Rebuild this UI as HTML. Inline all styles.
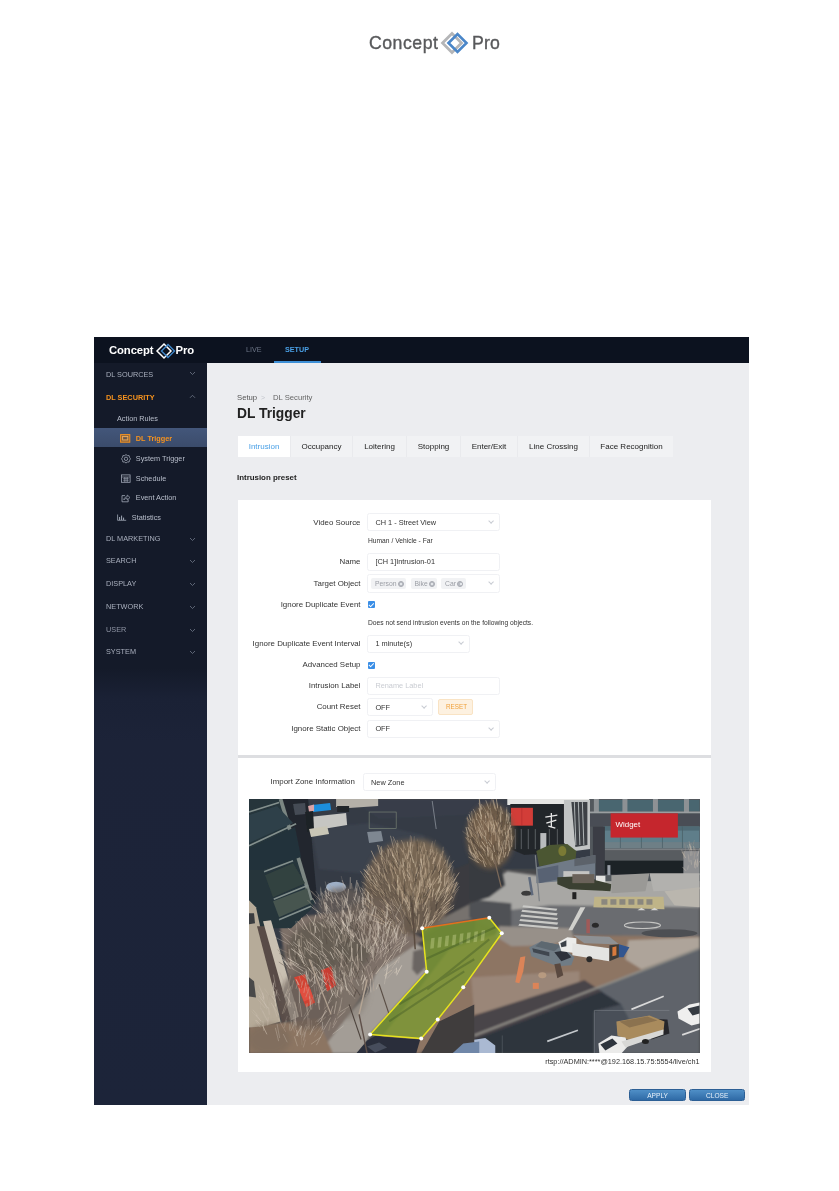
<!DOCTYPE html>
<html>
<head>
<meta charset="utf-8">
<style>
*{margin:0;padding:0;box-sizing:border-box;}
html,body{width:839px;height:1191px;background:#fff;overflow:hidden;}
body{font-family:"Liberation Sans",sans-serif;position:relative;}
.abs{position:absolute;}
.t{position:absolute;white-space:nowrap;line-height:1;}
#plogo1,#plogo2{will-change:transform;}
#app{will-change:transform;position:absolute;left:94px;top:337px;width:655px;height:768px;background:#ecedf0;overflow:hidden;}
#topbar{position:absolute;left:0;top:0;width:655px;height:25.6px;background:#0c121f;}
#side{position:absolute;left:0;top:25.6px;width:113px;height:742.4px;background:linear-gradient(#141a29 0,#141a29 305px,#1a2135 335px,#1c2338 380px,#1c2439 742px);}
.nav{position:absolute;left:12px;font-size:7.3px;color:#a9afbd;white-space:nowrap;line-height:1;}
.sub{position:absolute;font-size:7.3px;color:#b9bfcc;white-space:nowrap;line-height:1;}
.chev{position:absolute;left:95px;width:7px;height:5px;}
.card{position:absolute;background:#fff;}
.lbl{position:absolute;font-size:7.9px;color:#333;white-space:nowrap;line-height:1;text-align:right;width:160px;}
.inp{position:absolute;background:#fff;border:1px solid #f0f1f4;border-radius:2.5px;height:16px;}
.inp span{position:absolute;left:7px;top:4.6px;font-size:7.35px;color:#333;line-height:1;white-space:nowrap;}
.tab{position:absolute;top:99px;height:21.4px;background:#f1f2f4;font-size:8px;color:#222;line-height:21px;text-align:center;white-space:nowrap;}

.dd{position:absolute;right:6px;top:50%;margin-top:-3.2px;width:4.2px;height:4.2px;border-right:0.8px solid #c8ccd3;border-bottom:0.8px solid #c8ccd3;transform:rotate(45deg);}
.tag{position:absolute;top:3px;height:10.5px;background:#f1f2f4;border-radius:2px;font-weight:normal;font-size:6.8px;color:#9a9da4;line-height:11.6px;padding-left:3.6px;white-space:nowrap;}
.tag u{position:absolute;right:2.6px;top:2.3px;width:6px;height:6px;border-radius:50%;background:#b9bcc3;border:0.5px solid #a9acb3;}
.tag u:after{content:"";position:absolute;left:1.7px;top:1.7px;width:1.6px;height:1.6px;background:#eceef1;border-radius:50%;}
.cb{position:absolute;width:7.2px;height:7.2px;background:#3a8ee6;border-radius:1px;}
.cb:after{content:"";position:absolute;left:2.4px;top:0.9px;width:1.8px;height:3.6px;border-right:0.9px solid #fff;border-bottom:0.9px solid #fff;transform:rotate(45deg);}
.btn{position:absolute;top:752.2px;height:12px;border-radius:2.5px;background:linear-gradient(#4f8fc7,#2f6aa6);border:0.5px solid #2c5f95;color:#e8f2fb;font-size:6.6px;text-align:center;line-height:11.5px;}
</style>
</head>
<body>
<!-- page logo -->
<div class="t" id="plogo1" style="left:369.3px;top:35px;font-size:17.7px;color:#58595b;letter-spacing:0.5px;-webkit-text-stroke:0.35px #58595b;">Concept</div>
<div class="t" id="plogo2" style="left:471.5px;top:35px;font-size:17.7px;color:#58595b;letter-spacing:0.1px;-webkit-text-stroke:0.35px #58595b;">Pro</div>
<svg class="abs" style="left:440px;top:30px;" width="30" height="26" viewBox="0 0 30 26">
  <path d="M2.5 13 L12 3.5 L21.5 13 L12 22.5 Z" fill="none" stroke="#b4b5b7" stroke-width="2.7"/>
  <path d="M8.5 13 L17.5 4 L26.5 13 L17.5 22 Z" fill="none" stroke="#4a86c8" stroke-width="2.6"/>
</svg>

<div id="app">

  <div id="topbar">
    <div class="t" style="left:152px;top:8.6px;font-size:7.2px;color:#6d7687;">LIVE</div>
    <div class="t" style="left:191px;top:8.6px;font-size:7.2px;color:#4aa0e6;font-weight:bold;">SETUP</div>
    <div class="abs" style="left:180px;top:24px;width:47px;height:1.6px;background:#3d8fd6;"></div>
  </div>
  <div id="side">
    <div class="abs" style="left:0;top:65.4px;width:113px;height:19.4px;background:linear-gradient(#43567a,#3b4c6b);"></div>
  </div>
  <!-- app logo -->
  <div class="t" style="left:15px;top:8px;font-size:11.3px;color:#fff;font-weight:bold;letter-spacing:-0.1px;">Concept</div>
  <div class="t" style="left:81.5px;top:8px;font-size:11.3px;color:#fff;font-weight:bold;letter-spacing:-0.1px;">Pro</div>
  <svg class="abs" style="left:61px;top:4px;" width="22" height="20" viewBox="0 0 22 20">
    <path d="M2 10 L9 3 L16 10 L9 17 Z" fill="none" stroke="#fff" stroke-width="1.5"/>
    <path d="M6.5 10 L13 3.5 L19.5 10 L13 16.5 Z" fill="none" stroke="#3f86c9" stroke-width="1.4"/>
  </svg>

  <!-- nav -->
  <div class="nav" style="top:34px;">DL SOURCES</div>
  <div class="nav" style="top:57px;color:#f7931e;font-weight:bold;">DL SECURITY</div>
  <div class="sub" style="left:23px;top:77.5px;">Action Rules</div>
  <div class="sub" style="left:41.8px;top:97.5px;color:#f7931e;font-weight:bold;">DL Trigger</div>
  <div class="sub" style="left:41.8px;top:117.5px;">System Trigger</div>
  <div class="sub" style="left:41.8px;top:137.5px;">Schedule</div>
  <div class="sub" style="left:41.8px;top:157px;">Event Action</div>
  <div class="sub" style="left:37.8px;top:177px;">Statistics</div>
  <div class="nav" style="top:198px;">DL MARKETING</div>
  <div class="nav" style="top:220.2px;">SEARCH</div>
  <div class="nav" style="top:243.1px;">DISPLAY</div>
  <div class="nav" style="top:265.6px;">NETWORK</div>
  <div class="nav" style="top:288.6px;color:#8f95a4;">USER</div>
  <div class="nav" style="top:310.8px;">SYSTEM</div>


  <!-- sidebar icons -->
  <svg class="abs" style="left:26px;top:97px;" width="11" height="9" viewBox="0 0 11 9"><rect x="0.6" y="0.6" width="9.2" height="7.6" fill="#c9771a" fill-opacity="0.55" stroke="#f7931e" stroke-width="1"/><rect x="2.6" y="2.4" width="5.2" height="3.6" fill="none" stroke="#f9b45c" stroke-width="0.8"/><path d="M3.8 4.2 L6.6 4.2" stroke="#3c4b68" stroke-width="0.8"/></svg>
  <svg class="abs" style="left:27px;top:116.5px;" width="10" height="10" viewBox="0 0 10 10"><path d="M5 0.6 L6.4 1.6 L8.1 1.6 L8.5 3.3 L9.5 4.8 L8.5 6.3 L8.1 8 L6.4 8 L5 9 L3.6 8 L1.9 8 L1.5 6.3 L0.5 4.8 L1.5 3.3 L1.9 1.6 L3.6 1.6 Z" fill="none" stroke="#a2a9b8" stroke-width="0.8"/><circle cx="5" cy="4.8" r="1.7" fill="none" stroke="#a2a9b8" stroke-width="0.8"/></svg>
  <svg class="abs" style="left:27px;top:136.5px;" width="10" height="9" viewBox="0 0 10 9"><rect x="0.5" y="0.9" width="8.6" height="7.4" fill="none" stroke="#a2a9b8" stroke-width="0.8"/><path d="M0.5 3 H9.1 M2.2 4.6 H7.6 M2.2 6.3 H7.6 M3.4 3 V8 M5 3 V8 M6.6 3 V8" stroke="#9aa1af" stroke-width="0.6"/></svg>
  <svg class="abs" style="left:26.5px;top:156.5px;" width="10" height="9" viewBox="0 0 10 9"><path d="M4 1.6 H1 V7.8 H7.2 V5.6" fill="none" stroke="#a2a9b8" stroke-width="0.8"/><path d="M2.8 6 C3 3.8 4.4 2.8 6.2 2.8 V1 L9 3.5 L6.2 6 V4.3 C4.8 4.3 3.6 4.8 2.8 6 Z" fill="none" stroke="#a2a9b8" stroke-width="0.7"/></svg>
  <svg class="abs" style="left:22.5px;top:177px;" width="10" height="7" viewBox="0 0 10 7"><path d="M0.6 0.5 V6.3 H9.2" fill="none" stroke="#a2a9b8" stroke-width="0.8"/><path d="M2.6 6 V3 M4.6 6 V1.6 M6.6 6 V3.6" stroke="#a2a9b8" stroke-width="1"/></svg>
  <!-- chevrons -->
  <svg class="chev" style="top:34.3px;" viewBox="0 0 7 5"><path d="M1 1 L3.5 3.5 L6 1" fill="none" stroke="#707889" stroke-width="0.8"/></svg>
  <svg class="chev" style="top:57.4px;" viewBox="0 0 7 5"><path d="M1 3.8 L3.5 1.3 L6 3.8" fill="none" stroke="#707889" stroke-width="0.8"/></svg>
  <svg class="chev" style="top:199.5px;" viewBox="0 0 7 5"><path d="M1 1 L3.5 3.5 L6 1" fill="none" stroke="#707889" stroke-width="0.8"/></svg>
  <svg class="chev" style="top:222px;" viewBox="0 0 7 5"><path d="M1 1 L3.5 3.5 L6 1" fill="none" stroke="#707889" stroke-width="0.8"/></svg>
  <svg class="chev" style="top:245px;" viewBox="0 0 7 5"><path d="M1 1 L3.5 3.5 L6 1" fill="none" stroke="#707889" stroke-width="0.8"/></svg>
  <svg class="chev" style="top:267.5px;" viewBox="0 0 7 5"><path d="M1 1 L3.5 3.5 L6 1" fill="none" stroke="#707889" stroke-width="0.8"/></svg>
  <svg class="chev" style="top:290.5px;" viewBox="0 0 7 5"><path d="M1 1 L3.5 3.5 L6 1" fill="none" stroke="#707889" stroke-width="0.8"/></svg>
  <svg class="chev" style="top:313px;" viewBox="0 0 7 5"><path d="M1 1 L3.5 3.5 L6 1" fill="none" stroke="#707889" stroke-width="0.8"/></svg>
  <!-- breadcrumb + title -->
  <div class="t" style="left:143px;top:56.5px;font-size:7.7px;color:#555;">Setup</div>
  <div class="t" style="left:167px;top:56.8px;font-size:7px;color:#c3c6cc;">&gt;</div>
  <div class="t" style="left:179px;top:56.5px;font-size:7.7px;color:#666;">DL Security</div>
  <div class="t" style="left:143px;top:70.2px;font-size:13.8px;color:#222;font-weight:bold;">DL Trigger</div>

  <!-- tabs -->
  <div class="abs" style="left:144px;top:99px;width:435px;height:21.4px;background:#e9eaed;"></div>
  <div class="tab" style="left:144px;width:52px;background:#fff;color:#4aa0e6;">Intrusion</div>
  <div class="tab" style="left:197px;width:61px;">Occupancy</div>
  <div class="tab" style="left:259px;width:53px;">Loitering</div>
  <div class="tab" style="left:313px;width:53px;">Stopping</div>
  <div class="tab" style="left:367px;width:56px;">Enter/Exit</div>
  <div class="tab" style="left:424px;width:71px;">Line Crossing</div>
  <div class="tab" style="left:496px;width:83px;">Face Recognition</div>

  <div class="t" style="left:143px;top:136.5px;font-size:7.9px;color:#222;font-weight:bold;">Intrusion preset</div>

  <!-- card 1 -->
  <div class="abs" style="left:144px;top:416px;width:473px;height:6px;background:#dddee1;"></div>
  <div class="card" style="left:144px;top:162.5px;width:473px;height:255.3px;"></div>
  <div class="card" style="left:144px;top:420.6px;width:473px;height:314.4px;"></div>

  <!-- form rows -->
  <div class="lbl" style="left:106.5px;top:181.5px;">Video Source</div>
  <div class="inp" style="left:273.4px;top:176.2px;width:132.6px;height:18.3px;"><span>CH 1 - Street View</span><i class="dd"></i></div>
  <div class="t" style="left:274px;top:201px;font-size:6.7px;color:#333;">Human / Vehicle - Far</div>
  <div class="lbl" style="left:106.5px;top:221.4px;">Name</div>
  <div class="inp" style="left:273.4px;top:215.5px;width:132.6px;height:18.3px;"><span>[CH 1]Intrusion-01</span></div>
  <div class="lbl" style="left:106.5px;top:242.8px;">Target Object</div>
  <div class="inp" style="left:273.4px;top:237.3px;width:132.6px;height:18.3px;">
    <b class="tag" style="left:3px;width:35px;">Person<u></u></b>
    <b class="tag" style="left:42.5px;width:26.5px;">Bike<u></u></b>
    <b class="tag" style="left:73px;width:24.5px;">Car<u></u></b>
    <i class="dd"></i></div>
  <div class="lbl" style="left:106.5px;top:263.9px;">Ignore Duplicate Event</div>
  <div class="cb" style="left:274px;top:263.8px;"></div>
  <div class="t" style="left:274px;top:282.8px;font-size:6.7px;color:#333;">Does not send intrusion events on the following objects.</div>
  <div class="lbl" style="left:106.5px;top:302.7px;">Ignore Duplicate Event Interval</div>
  <div class="inp" style="left:273.4px;top:297.5px;width:103px;height:18.3px;"><span>1 minute(s)</span><i class="dd"></i></div>
  <div class="lbl" style="left:106.5px;top:324.4px;">Advanced Setup</div>
  <div class="cb" style="left:274px;top:324.6px;"></div>
  <div class="lbl" style="left:106.5px;top:345px;">Intrusion Label</div>
  <div class="inp" style="left:273.4px;top:339.8px;width:132.6px;height:18px;"><span style="color:#c9ccd2;">Rename Label</span></div>
  <div class="lbl" style="left:106.5px;top:366.3px;">Count Reset</div>
  <div class="inp" style="left:273.4px;top:361.2px;width:65.6px;height:17.6px;"><span>OFF</span><i class="dd"></i></div>
  <div class="abs" style="left:343.5px;top:362.3px;width:35.5px;height:15.7px;background:#fdf1e0;border:1px solid #f9e3c4;border-radius:2px;"><div class="t" style="left:7.5px;top:4px;font-size:6.3px;color:#f0a23c;">RESET</div></div>
  <div class="lbl" style="left:106.5px;top:387.8px;">Ignore Static Object</div>
  <div class="inp" style="left:273.4px;top:382.8px;width:132.6px;height:18px;"><span>OFF</span><i class="dd"></i></div>

  <!-- card 2 content -->
  <div class="lbl" style="left:100.8px;top:440.5px;">Import Zone Information</div>
  <div class="inp" style="left:268.5px;top:436px;width:133.7px;height:17.5px;"><span style="left:7.5px;">New Zone</span><i class="dd"></i></div>
<!--PHOTO-START-->
  <div class="abs" style="left:155px;top:461.6px;width:450.5px;height:254.5px;overflow:hidden;background:#4a4a4c;"><svg id="photo" style="position:absolute;left:-2px;top:-2px;filter:blur(0.45px);" width="454.5" height="258.5" viewBox="-2 -2 454 258" preserveAspectRatio="none">
    <defs>
      <filter id="b1" x="-5%" y="-5%" width="110%" height="110%"><feGaussianBlur stdDeviation="1"/></filter>
      <filter id="b2" x="-10%" y="-10%" width="120%" height="120%"><feGaussianBlur stdDeviation="2.5"/></filter>
      <filter id="b05" x="-5%" y="-5%" width="110%" height="110%"><feGaussianBlur stdDeviation="0.6"/></filter>
      <filter id="b4" x="-20%" y="-20%" width="140%" height="140%"><feGaussianBlur stdDeviation="4"/></filter>
      <clipPath id="pc"><rect x="-2" y="-2" width="454" height="258"/></clipPath>
    </defs>
    <g clip-path="url(#pc)">
    <rect x="-2" y="-2" width="454" height="258" fill="#4a4a4c"/>
<g filter="url(#b1)">
<polygon points="0,0 450,0 450,70 230,70 225,140 0,150" fill="#343b45" />
<polygon points="62,30 120,24 175,36 178,60 120,75 70,70" fill="#3b424d" />
<polygon points="100,0 260,0 260,14 130,20" fill="#373e48" />
<polygon points="170,130 240,117 262,100 252,84 215,98 183,116" fill="#77726e" />
<polygon points="232,100 262,84 266,100 248,112" fill="#9a9896" />
<polygon points="205,70 230,60 230,100 195,118" fill="#3a3b3f" />
<polygon points="225,95 258,72 300,78 362,76 450,74 450,110 300,108 240,114 225,116" fill="#a8a7a4" />
<polygon points="220,116 300,106 450,108 450,138 330,136 253,131 238,118" fill="#6a6c6f" />
<polygon points="220,100 262,104 262,130 250,134 220,118" fill="#505154" />
<polygon points="220,55 250,56 256,86 240,98 220,104" fill="#393b3f" />
<polygon points="200,150 255,132 330,136 450,137 450,149 225,236 225,254 120,254" fill="#8d7463" />
<polygon points="250,127 322,129 324,139 300,146 262,147 246,137" fill="#979089" />
<polygon points="379,141 450,138 450,149 392,170 376,160" fill="#aea49a" />
<polygon points="222,178 330,172 330,192 225,215" fill="#9a8678" />
<polygon points="450,149 225,236 225,254 450,254" fill="#5f646b" />
<polygon points="225,225 335,181 372,205 345,212 345,254 225,254" fill="#2d343e" />
<polygon points="345,212 372,205 385,230 372,254 345,254" fill="#4a5058" />
<polygon points="170,254 225,216 335,181 352,192 225,240 205,254" fill="#4a4448" />
<path d="M225,236 L450,149" stroke="#8f8c86" stroke-width="2.2" fill="none" />
<polygon points="66,254 120,192 134,152 165,143 176,150 177.5,172.5 121,235 112,254" fill="#a39d96" />
<polygon points="164,152 175,149 176.5,168 168,176 163,170" fill="#6a6562" />
<polygon points="30,120 120,110 175,140 130,170 100,215 70,254 40,254 45,215" fill="#7d7068" />
<polygon points="0,227 16,225 68,219 84,254 0,254" fill="#8c7562" />
</g>
<g filter="url(#b05)">
<polygon points="0,0 59,0 67,100 62,110 42,129 12,129 0,101" fill="#25343b" />
<polygon points="33,0 59,0 68,100 62,101" fill="#23282f" />
<polygon points="44,5 56,4 57,15 46,16" fill="#454b54" />
<path d="M31.5,0 L62,101" stroke="#7b8682" stroke-width="3.8" fill="none" />
<path d="M0,13 L30,3.5" stroke="#84908d" stroke-width="1.7" fill="none" />
<path d="M0,46.6 L47,24.7" stroke="#84908d" stroke-width="1.7" fill="none" />
<path d="M15,72.6 L44,61.7" stroke="#84908d" stroke-width="1.7" fill="none" />
<path d="M24.7,100 L59,86" stroke="#84908d" stroke-width="1.7" fill="none" />
<path d="M30,120.6 L62,107" stroke="#84908d" stroke-width="1.7" fill="none" />
<polygon points="0,16 28,7 44,24 0,44" fill="#2e4048" />
<polygon points="0,50 46,28 52,58 14,70 0,70" fill="#22313a" />
<polygon points="24,102 58,89 62,104 30,118" fill="#46544f" />
<polygon points="16,76 44,64 56,84 24,98" fill="#33423f" />
<polygon points="87,0 129,0 129,7 100,9 87,8" fill="#b4b0a8" />
<polygon points="88,7 100,7 100,13 88,13" fill="#23262a" />
<polygon points="60,18 97,14 98,26 62,32" fill="#c6c6c2" />
<polygon points="63,6 81,4 82,11 64,13" fill="#1e8fdc" />
<polygon points="59,7 65,5.5 65,12 60,13" fill="#d9a4a6" />
<polygon points="56,13 64,12 65,32 58,33" fill="#1f2226" />
<polygon points="60,30 78,27 80,35 62,38" fill="#c9c6b6" />
<ellipse cx="87" cy="88" rx="10" ry="5.5" fill="#9fb1c8" />
<polygon points="118,33 132,32 134,42 120,44" fill="#7e8791" />
<polygon points="0,101 7,108 31.5,222 13.7,227 0,228" fill="#b6ab99" />
<polygon points="0,114 5,114 6,124 0,125" fill="#3a3d40" />
<polygon points="0,178 5,182 7,198 0,197" fill="#4a4a48" />
<polygon points="8,127 19,127 45,219 33,223" fill="#584c46" />
<polygon points="14,122 22,121 50,217 42,221" fill="#c9c0b2" />
</g>
<g filter="url(#b05)">
<polygon points="258,0 340,0 340,6 258,6" fill="#e6e6e4" />
<polygon points="261,5 315,5 315,53 275,56 261,50" fill="#24272b" />
<rect x="261.7" y="8.8" width="21.9" height="17.8" fill="#d23d38" />
<path d="M272.5,8.8 L272.5,26.6" stroke="#b02a28" stroke-width="0.6" fill="none" />
<path d="M296,18 L308,16 M302,14 L302,28 M297,24 L307,21 M299,27 L306,29" stroke="#e8e8e8" stroke-width="1.3" fill="none"/>
<path d="M266,30 L266,50" stroke="#6f7478" stroke-width="0.7" fill="none" />
<path d="M272,30 L272,50" stroke="#6f7478" stroke-width="0.7" fill="none" />
<path d="M279,30 L279,50" stroke="#6f7478" stroke-width="0.7" fill="none" />
<path d="M286,30 L286,50" stroke="#6f7478" stroke-width="0.7" fill="none" />
<path d="M300,30 L300,50" stroke="#6f7478" stroke-width="0.7" fill="none" />
<path d="M308,30 L308,50" stroke="#6f7478" stroke-width="0.7" fill="none" />
<rect x="291" y="34" width="6" height="18" fill="#b9bbbd" />
<polygon points="314.6,1 341,1 341,50 325,52 314.6,44" fill="#c2c4c4" />
<polygon points="322,3 338,3 338,46 326,48" fill="#3c4045" />
<path d="M325,3 L326.5,46" stroke="#aeb2b4" stroke-width="1" fill="none" />
<path d="M329,3 L330.5,46" stroke="#aeb2b4" stroke-width="1" fill="none" />
<path d="M333,3 L334.5,46" stroke="#aeb2b4" stroke-width="1" fill="none" />
<rect x="340.6" y="0" width="110" height="82" fill="#53585d" />
<rect x="347" y="1" width="103" height="11.5" fill="#4a6670" />
<rect x="344.5" y="0" width="5" height="13" fill="#8d9194" />
<rect x="373" y="0" width="5" height="13" fill="#8d9194" />
<rect x="403.5" y="0" width="5" height="13" fill="#8d9194" />
<rect x="434.5" y="0" width="5" height="13" fill="#8d9194" />
<rect x="340.6" y="12.5" width="110" height="2" fill="#9a9ea0" />
<rect x="340.6" y="14.5" width="110" height="13" fill="#494e54" />
<rect x="354" y="27.5" width="96" height="22" fill="#5e7e8a" />
<rect x="354" y="27.5" width="96" height="4" fill="#4f6a74" />
<rect x="354" y="43" width="96" height="6" fill="#6e7f86" />
<path d="M371,27.5 L371,49" stroke="#4c6169" stroke-width="0.8" fill="none" />
<path d="M392,27.5 L392,49" stroke="#4c6169" stroke-width="0.8" fill="none" />
<path d="M413,27.5 L413,49" stroke="#4c6169" stroke-width="0.8" fill="none" />
<path d="M433,27.5 L433,49" stroke="#4c6169" stroke-width="0.8" fill="none" />
<rect x="354" y="49.5" width="96" height="12.5" fill="#585c61" />
<rect x="354" y="49.5" width="96" height="1.5" fill="#7a7e82" />
<rect x="354" y="61.5" width="80" height="14" fill="#1f2328" />
<rect x="434" y="52" width="16" height="24" fill="#8f9092" />
<polygon points="343.5,27.5 355.5,27.5 355.5,83 343.5,83" fill="#3a3e44" />
<rect x="346.5" y="76.5" width="9.5" height="7" fill="#e2e2e0" />
<rect x="358" y="66" width="3" height="10" fill="#9aa0a8" />
<polygon points="287,52 300,46 318,45 327,52 326,62 290,67" fill="#4c5632" />
<ellipse cx="313" cy="52" rx="4" ry="5" fill="#7a7a34" />
<polygon points="287,68 325,60 346,56 346,80 310,82 287,84" fill="#707a86" />
<polygon points="325,60 346,56 346,64 325,67" fill="#5b626b" />
<rect x="314" y="72" width="26" height="6" fill="#c4c4c2" />
<polygon points="288,70 309,66 309,80 290,84" fill="#596273" />
<polygon points="308,78 330,77 362,85 361,92 320,90 308,85" fill="#3a4030" />
<rect x="323" y="75" width="22" height="9" fill="#6b625a" />
</g>
<g filter="url(#b05)">
<polygon points="362,76 400,74 396,92 362,94" fill="#9a9996" />
<polygon points="400,74 450,74 450,90 404,92" fill="#b2b1ae" />
<polygon points="415,92 450,88 450,108 425,106" fill="#bab6ae" />
<polygon points="345,97.5 414,97.5 415,110 344,108" fill="#bfb488" />
<rect x="352" y="100" width="6" height="5.5" fill="#8a877e" />
<rect x="361" y="100" width="6" height="5.5" fill="#8a877e" />
<rect x="370" y="100" width="6" height="5.5" fill="#8a877e" />
<rect x="379" y="100" width="6" height="5.5" fill="#8a877e" />
<rect x="388" y="100" width="6" height="5.5" fill="#8a877e" />
<rect x="397" y="100" width="6" height="5.5" fill="#8a877e" />
<polygon points="274,106 308,109.5 307,111.6 273,108" fill="#c9c9c6" />
<polygon points="273,110.6 308.3,114.1 307.3,116.2 272,112.6" fill="#c9c9c6" />
<polygon points="272,115.2 308.6,118.7 307.6,120.8 271,117.2" fill="#c9c9c6" />
<polygon points="271,119.8 308.9,123.3 307.9,125.4 270,121.8" fill="#c9c9c6" />
<polygon points="270,124.4 309.2,127.9 308.2,130 269,126.4" fill="#c9c9c6" />
<polygon points="331,108 336,108 323,131 319,131" fill="#d0d0cc" />
<ellipse cx="393" cy="126" rx="18" ry="3.3" fill="none" stroke="#c4c4c2" stroke-width="1.1"/>
<polygon points="388,111 392,108.5 396,111" fill="#d5d5d2" />
<polygon points="401,111 405,108.5 409,111" fill="#d5d5d2" />
<ellipse cx="420" cy="134" rx="28" ry="4" fill="#4e4f52" />
<rect x="337" y="120" width="3.5" height="14" fill="#a05a58" />
<ellipse cx="346" cy="126" rx="3.5" ry="2.5" fill="#2a2a2c" />
<rect x="323" y="93" width="4" height="7" fill="#222" />
<ellipse cx="277" cy="94" rx="5" ry="2.5" fill="#3a3a3a" />
<path d="M286,56 L290,102" stroke="#7a7f84" stroke-width="1.2" fill="none" />
<path d="M280,78 L283,96" stroke="#5e6a7c" stroke-width="2.5" fill="none" />
</g>
<g filter="url(#b05)">
<polygon points="280,148 292,142 312,146 325,158 322,166 308,167 282,157" fill="#707b85" />
<polygon points="305,153 316,151 322,158 312,162" fill="#2d333b" />
<polygon points="283,149 300,153 300,157 284,153" fill="#3f464f" />
<polygon points="292,142 312,146 305,152 286,147" fill="#5d6770" />
<polygon points="309,143 318,138 327,139 327,154 312,152" fill="#ececea" />
<polygon points="311,144 317,141 317,147 312,148" fill="#3a3f46" />
<polygon points="324,136 360,137.5 369.5,145 335,144" fill="#8e9194" />
<polygon points="323,144 360,149 360,162 323,156" fill="#e4e4e2" />
<polygon points="360,146 369.5,145 369.5,158 360,162" fill="#3c3a38" />
<polygon points="363,148 367,147 367,156 363,157" fill="#d87a3c" />
<polygon points="369.5,145 380,148 374,158 369.5,158" fill="#30558f" />
<ellipse cx="340" cy="160" rx="3" ry="3" fill="#2a2a2a" />
<polygon points="271,158 276,157 274,172 270,184 266,183" fill="#dc8458" />
<rect x="283.5" y="183.5" width="6" height="6" fill="#dc8458" />
<polygon points="305,165 311,164 314,176 308,179" fill="#5a4a40" />
<ellipse cx="293" cy="176" rx="4" ry="3" fill="#b79a80" />
<polygon points="394,219 418,220 420,234 402,240" fill="#26282c" />
<polygon points="367,222 400,216 415,222 414,232 383,242 368,236" fill="#a98b5d" />
<polygon points="370,222 398,217 408,221 380,228" fill="#8b7250" />
<polygon points="349,244 362,236 376,238 379,246 372,254 350,254" fill="#ebebea" />
<polygon points="351,245 363,239 368,244 356,251" fill="#2f353d" />
<polygon points="372,242 414,230 414,235 376,248" fill="#d8d8d6" />
<ellipse cx="396" cy="242" rx="3.5" ry="2.5" fill="#222" />
<polygon points="428,212 440,205 450,203 450,224 442,226 429,219" fill="#efefee" />
<polygon points="438,209 450,206 450,214 443,216" fill="#343a42" />
<polygon points="220,241 236,238.5 246,246 246,254 220,254" fill="#aab9d2" />
<polygon points="107,254 118,241 126,236.5 171,240 167,254" fill="#2a2f3a" />
<polygon points="118,247 130,243 138,248 126,253" fill="#474e5c" />
<polygon points="172,254 190,222 225,205 225,254" fill="#403c3d" />
<polygon points="203,254 214,244 230,242 230,254" fill="#6f87a8" />
<polygon points="381.7,209 414,196 414.5,197.6 382.3,210.8" fill="#d9d9d9" />
<polygon points="297.6,241 328.3,230 328.8,231.6 298.2,242.8" fill="#c4c8cc" />
<polygon points="432.4,234.5 450,228.5 450,230.3 433,236.3" fill="#d9d9d9" />
</g>
<g filter="url(#b2)">
<ellipse cx="160" cy="88" rx="45" ry="47" fill="#6c5d4e" fill-opacity="0.92"/>
<ellipse cx="170" cy="72" rx="30" ry="32" fill="#7b6a56" fill-opacity="0.8"/>
<ellipse cx="125" cy="122" rx="30" ry="22" fill="#6f6257" fill-opacity="0.8"/>
<ellipse cx="95" cy="108" rx="26" ry="20" fill="#6a5f58" fill-opacity="0.75"/>
<ellipse cx="241" cy="37" rx="24" ry="33" fill="#6e5b47" fill-opacity="0.9"/>
<ellipse cx="238" cy="30" rx="12" ry="18" fill="#806a52" fill-opacity="0.7"/>
<ellipse cx="80" cy="150" rx="42" ry="30" fill="#5e554e" fill-opacity="0.75"/>
<ellipse cx="60" cy="200" rx="30" ry="30" fill="#5f564f" fill-opacity="0.6"/>
<ellipse cx="100" cy="190" rx="20" ry="30" fill="#7a7066" fill-opacity="0.4"/>
<ellipse cx="20" cy="240" rx="22" ry="16" fill="#7c6a5a" fill-opacity="0.6"/>
</g>
<g filter="url(#b05)">
<polygon points="45,178 56,175 66,203 57,208" fill="#d24233" />
<polygon points="72,171 82,167 87,186 78,192" fill="#c93d30" />
<polygon points="50,190 60,187 64,198 55,202" fill="#e05040" />
</g>
<g filter="url(#b05)">
<path d="M152.2,105.6l-1.1,-5.5M126.7,86.1l-2.0,-5.5M160.2,113.7l0.3,-9.1M153.2,120.0l-2.8,-12.6M163.7,102.2l2.1,-8.0M152.3,80.3l-2.2,-11.3M135.2,97.6l-2.9,-7.9M194.1,110.2l1.6,-5.8M155.2,75.7l-4.0,-8.3M155.5,114.9l-0.4,-6.9M163.6,131.6l-1.7,-11.1M180.2,93.2l1.0,-12.2M158.0,111.2l-0.4,-12.5M169.8,50.0l-1.8,-10.4M163.3,97.6l-3.6,-8.8M196.5,88.4l2.4,-10.9M159.6,91.8l-2.3,-8.1M193.8,64.5l2.8,-8.3M180.5,128.5l4.3,-3.4M134.7,91.4l-1.2,-5.8M178.0,62.9l-0.3,-6.4M157.5,88.3l-1.1,-8.5M160.1,119.2l-0.8,-7.9M118.3,78.6l-3.4,-6.1M163.4,55.7l-0.4,-12.7M172.1,112.3l5.5,-10.2M185.6,70.3l-0.1,-6.6M158.7,98.1l-0.6,-11.9M184.9,75.0l5.3,-11.9M122.7,89.3l-3.7,-9.3M183.1,52.8l3.3,-12.2" stroke="#94826e" stroke-width="0.40" stroke-opacity="0.72" fill="none"/>
<path d="M152.8,98.1l-1.3,-5.1M147.5,63.3l-3.2,-9.1M149.6,101.9l-1.1,-12.9M175.8,77.4l0.8,-8.3M192.8,60.3l1.2,-12.6M163.7,129.0l-3.0,-9.8M147.5,56.8l-3.9,-8.0M150.2,48.4l-2.4,-7.6M167.4,71.2l-3.7,-11.4M159.5,69.4l-2.6,-10.7M195.6,113.4l5.7,-8.4M168.6,109.2l-0.1,-9.1M198.5,89.1l4.3,-5.0M168.3,90.1l-2.0,-9.7M138.3,118.7l-5.5,-10.1M136.4,117.4l-5.0,-6.7M199.7,83.8l5.4,-9.8M134.0,81.8l-1.2,-7.3M125.3,109.6l-5.0,-8.5M130.1,69.6l-7.6,-7.9M175.9,82.3l-0.6,-8.3M203.9,92.4l3.8,-10.1M168.8,92.7l2.4,-12.4" stroke="#a8947c" stroke-width="0.65" stroke-opacity="0.72" fill="none"/>
<path d="M172.3,95.8l0.7,-11.6M136.6,64.9l-5.8,-7.8M118.4,83.4l-3.2,-6.5M145.7,112.5l-5.4,-10.0M137.8,107.8l-7.7,-6.5M178.7,98.4l0.1,-7.7M177.5,90.0l-0.7,-7.9M148.6,89.1l0.7,-11.3M138.3,86.3l-4.0,-4.9M128.5,95.1l-6.5,-6.2M171.3,53.8l3.7,-9.4M161.0,88.4l1.1,-11.7M141.7,102.2l-4.8,-9.2M152.6,87.8l-2.8,-9.8M153.8,55.8l1.1,-12.5M127.0,93.8l-6.3,-5.6M183.2,53.7l-1.1,-7.3M180.1,67.5l0.0,-11.2M172.1,63.9l-0.2,-10.0M189.5,121.6l5.7,-9.1M160.6,47.4l0.6,-11.3M191.6,99.0l2.7,-6.4M180.3,74.1l-1.8,-11.5M182.3,119.5l7.0,-9.8M180.7,80.6l5.5,-9.3M138.4,74.8l-1.7,-4.9M174.6,68.2l3.5,-7.2M127.8,91.1l-4.9,-7.9M183.2,52.5l-0.3,-8.4M179.8,115.6l2.0,-4.8M148.4,123.0l-2.3,-8.7M157.9,99.1l0.9,-9.8M204.3,97.0l5.1,-7.2" stroke="#c4b097" stroke-width="0.40" stroke-opacity="0.72" fill="none"/>
<path d="M199.9,102.0l2.8,-5.5M177.3,88.3l3.4,-9.6M148.5,93.2l0.0,-12.2M167.0,79.7l2.2,-7.0M155.0,102.2l-1.8,-7.1M127.2,62.8l-5.1,-11.2M176.0,105.6l4.5,-11.3M133.3,120.2l-7.6,-6.9M184.1,85.7l6.6,-10.2M169.2,126.1l0.7,-11.1M197.5,76.5l3.2,-6.6M172.5,83.6l-0.6,-12.2M197.4,92.4l5.7,-10.2M183.1,64.8l3.4,-6.5M185.9,100.6l3.6,-10.3M139.3,107.2l-3.7,-6.9M119.3,75.9l-3.4,-4.7M150.7,90.8l0.2,-7.4M192.9,109.2l7.6,-5.8M203.6,82.9l6.4,-9.5M143.8,111.4l-5.9,-7.9M130.3,76.3l-1.7,-12.8" stroke="#c4b097" stroke-width="0.90" stroke-opacity="0.72" fill="none"/>
<path d="M145.4,127.9l-8.0,-5.4M180.1,116.4l0.6,-9.2M126.0,73.8l-3.8,-3.9M131.9,87.9l-5.6,-6.1M180.7,98.9l1.0,-9.2M132.0,67.5l-6.7,-8.3M117.6,86.6l-5.4,-4.2M169.0,91.6l1.9,-9.9M173.7,111.8l-0.2,-12.8M188.9,62.9l4.6,-10.9M153.7,90.7l0.4,-9.1M153.2,68.7l-3.7,-9.1M147.7,112.1l-5.4,-8.0M194.7,98.8l3.6,-5.3M177.0,127.8l2.5,-6.4M119.9,107.8l-6.2,-4.2M164.6,47.6l0.5,-10.5M153.0,68.7l0.6,-7.8M184.3,118.3l4.4,-7.7M185.3,118.1l3.9,-5.7M125.9,107.9l-4.0,-9.0M128.8,81.4l-4.8,-7.9M150.8,76.1l0.5,-9.2" stroke="#bfa98e" stroke-width="0.40" stroke-opacity="0.72" fill="none"/>
<path d="M136.8,113.9l-4.6,-3.0M204.2,94.0l6.0,-7.0M179.8,88.3l2.4,-4.6M174.1,79.3l2.7,-9.9M159.1,98.9l0.4,-7.2M174.3,65.7l1.1,-10.4M173.7,61.0l3.7,-10.0M177.1,112.5l1.1,-12.7M168.6,110.1l-1.1,-12.2M133.5,57.9l-2.5,-9.6M168.7,130.9l-1.7,-11.4M183.2,124.2l7.0,-8.4M178.7,121.4l1.3,-6.1M148.9,60.2l-0.8,-8.7M157.0,117.4l-3.6,-7.6M156.0,106.4l0.6,-12.9M149.7,100.4l-2.5,-11.0M120.9,109.6l-7.0,-9.2M173.1,109.4l3.1,-7.0M163.2,82.9l-3.4,-10.0M186.9,102.5l2.1,-4.7M127.9,96.9l-4.6,-3.9M187.8,84.6l3.7,-5.1M137.9,66.1l-0.7,-6.6M138.1,59.9l-1.5,-6.0M156.5,50.8l-4.4,-9.8M197.8,93.6l6.8,-8.9M199.6,68.6l1.7,-5.1M194.5,97.0l6.0,-6.8M172.9,53.6l-1.9,-6.8" stroke="#b9a58c" stroke-width="0.65" stroke-opacity="0.72" fill="none"/>
<path d="M147.7,128.2l-3.7,-5.9M168.6,74.1l-3.7,-12.0M174.0,51.8l1.7,-6.6M179.2,121.4l2.5,-10.3M131.8,80.1l-5.4,-5.4M137.4,95.0l-1.2,-5.7M204.7,91.0l4.5,-7.3M177.5,59.5l-0.4,-7.6M165.5,123.9l0.3,-6.6M146.5,50.6l-2.5,-10.5M170.0,104.7l-0.7,-7.6M150.9,109.7l-7.4,-9.9M176.9,87.7l2.3,-8.2M148.3,108.7l-4.2,-7.4M163.3,82.8l-1.0,-6.4M141.9,96.7l-3.3,-5.2M192.7,117.2l8.4,-7.9M169.8,130.9l-0.6,-9.1M140.5,91.3l-1.1,-11.5M122.5,78.3l-7.2,-7.4M144.0,131.2l-7.6,-3.9M176.3,127.5l2.4,-7.6M161.3,116.8l-0.0,-5.2M177.8,95.0l1.0,-8.7" stroke="#94826e" stroke-width="0.65" stroke-opacity="0.72" fill="none"/>
<path d="M141.8,88.6l-5.8,-11.0M135.0,125.8l-8.4,-5.3M175.6,72.1l0.5,-7.9M196.0,110.9l4.1,-11.2M198.4,93.7l3.4,-5.5M162.8,85.4l0.5,-12.0M161.2,114.3l-1.0,-6.2M184.5,84.6l0.9,-4.9M146.1,95.3l-3.4,-4.5M192.2,109.8l3.3,-8.7M170.6,48.3l1.6,-5.8M155.7,112.9l-3.0,-6.4M142.7,67.8l-4.2,-11.8M123.8,108.8l-9.2,-7.8M167.0,97.5l-2.6,-11.1M185.2,72.9l0.9,-12.7M130.5,110.5l-5.9,-4.8M194.1,88.0l3.6,-10.5M162.9,94.5l1.6,-10.5M159.2,86.5l1.5,-10.9M169.0,82.7l3.6,-11.8M118.5,89.0l-2.9,-4.4M186.7,87.4l0.1,-7.2M161.7,106.7l-0.6,-5.4M201.8,85.9l2.6,-6.1M186.8,105.4l6.6,-7.6M200.6,84.2l3.9,-6.3M139.1,68.2l-4.8,-10.5M143.8,84.4l-0.5,-7.1M169.7,65.8l3.3,-11.4M128.2,91.3l-4.0,-4.5M153.0,119.5l-1.8,-6.5M173.5,106.7l-0.8,-10.1M200.3,91.1l5.8,-7.6M146.4,92.1l-4.0,-9.1M183.4,66.7l3.8,-10.8" stroke="#a8947c" stroke-width="0.40" stroke-opacity="0.72" fill="none"/>
<path d="M172.2,87.0l1.6,-11.2M164.8,113.6l1.1,-8.1M186.4,104.6l5.3,-10.8M149.2,95.5l0.1,-10.1M121.7,83.7l-6.6,-9.4M189.2,84.6l2.4,-10.9M166.8,76.9l1.4,-8.6M191.1,96.2l3.4,-7.5M158.8,47.7l-0.7,-5.1M166.1,67.7l1.0,-5.3M175.8,96.7l2.1,-6.8M151.0,113.0l-7.8,-9.3M185.3,96.3l5.2,-9.2M167.6,117.0l-2.2,-7.9M161.4,118.4l0.0,-6.3M171.6,77.9l-0.6,-10.7M133.4,116.1l-7.8,-9.4M132.8,60.7l-0.6,-9.5M192.3,99.9l5.7,-11.0M178.6,119.0l0.8,-5.0M151.7,122.6l-6.3,-6.1M159.8,112.3l-2.1,-4.8M147.3,53.5l0.9,-9.5M191.6,106.0l5.8,-7.9" stroke="#d2c2aa" stroke-width="0.65" stroke-opacity="0.72" fill="none"/>
<path d="M189.1,79.4l2.3,-5.0M134.0,94.6l-6.7,-8.6M184.4,55.8l-0.7,-5.2M123.2,84.8l-2.9,-10.4M144.9,70.4l-3.5,-6.1M135.7,102.5l-5.7,-8.9M158.8,103.0l-3.8,-8.2M199.9,94.0l3.4,-7.0M139.4,110.6l-1.5,-5.4M128.7,87.9l-1.4,-5.1M165.1,81.7l2.0,-10.5M148.2,77.7l-2.3,-4.9M194.6,93.9l4.6,-7.9M125.1,116.5l-9.5,-3.5M176.5,52.0l-1.9,-8.9M116.3,79.2l-5.2,-7.5M178.0,85.8l0.4,-5.7M197.4,91.4l2.4,-9.8M120.2,73.4l-1.8,-6.1" stroke="#bfa98e" stroke-width="0.65" stroke-opacity="0.72" fill="none"/>
<path d="M133.0,54.2l-0.8,-7.2M171.0,105.3l-0.5,-6.8M172.6,97.0l0.8,-7.7M122.7,87.1l-5.5,-7.4M173.5,84.1l2.8,-8.0M194.7,99.3l5.9,-5.4M185.1,71.2l-0.5,-5.0M150.9,74.8l-1.8,-10.1M180.3,59.2l2.0,-7.3M177.0,80.0l0.8,-9.8M199.3,68.9l5.5,-7.5M128.5,91.8l-2.3,-6.0M195.8,114.4l9.0,-6.2M123.3,104.8l-3.9,-4.6M137.2,72.6l-2.3,-12.0M136.0,123.8l-5.1,-4.2M141.5,71.5l-0.4,-7.9M183.5,97.6l-0.2,-6.5M161.1,79.0l-0.6,-9.3M127.5,90.5l-3.8,-10.5M158.3,77.0l-0.2,-10.7M179.8,80.9l2.8,-10.0M166.1,111.9l2.0,-11.2M139.3,84.5l-5.7,-8.7M162.5,72.3l-4.1,-11.3M142.4,114.5l-3.4,-4.3M143.7,56.8l-1.5,-8.2M155.2,62.8l1.3,-6.5M171.6,64.0l-0.4,-11.7M178.1,61.2l2.0,-6.8" stroke="#a8947c" stroke-width="0.90" stroke-opacity="0.72" fill="none"/>
<path d="M169.9,111.8l-1.4,-9.2M194.1,96.0l4.5,-9.2M122.1,110.6l-6.9,-6.2M162.7,47.1l-0.7,-9.9M181.7,60.0l3.8,-7.3M190.3,63.0l4.4,-11.5M170.4,87.8l3.5,-11.6M123.5,105.4l-8.1,-6.9M129.3,119.1l-7.6,-4.3M161.9,81.2l1.2,-12.0M150.4,63.0l-4.8,-9.3M197.2,83.9l4.8,-6.0M194.4,111.2l5.0,-4.7M151.5,67.4l-2.1,-7.5M187.9,69.7l1.2,-6.9M141.8,56.8l-3.7,-7.8M142.7,53.6l-4.3,-8.0M196.7,82.4l2.6,-6.3M182.9,101.9l1.7,-12.0M171.4,82.0l-1.1,-8.3M149.6,67.5l-0.1,-10.9" stroke="#94826e" stroke-width="0.90" stroke-opacity="0.72" fill="none"/>
<path d="M153.3,104.5l-0.3,-12.6M158.0,59.7l2.1,-12.4M160.6,56.1l0.8,-5.1M146.5,75.2l-1.4,-7.5M174.0,87.6l-0.6,-8.9M169.6,98.3l-1.1,-6.4M176.5,75.5l-0.6,-7.4M125.2,72.5l-3.5,-5.9M181.0,127.0l6.8,-8.9M164.1,94.3l0.8,-6.9M176.1,95.9l4.4,-11.7M189.5,72.7l1.5,-10.8M179.6,99.0l1.8,-8.8M174.7,122.5l2.9,-7.3M153.6,53.1l-2.3,-4.5M144.3,56.9l-2.7,-7.8M166.4,103.9l3.2,-10.4M191.6,72.5l5.0,-11.5" stroke="#bfa98e" stroke-width="0.90" stroke-opacity="0.72" fill="none"/>
<path d="M184.8,65.0l-0.2,-7.0M195.0,86.7l1.0,-12.2M174.5,117.4l3.8,-8.7M195.1,76.5l7.5,-10.1M194.5,102.5l4.0,-8.1M139.1,58.2l-0.2,-8.1M170.5,93.5l0.1,-12.2M163.8,100.6l0.2,-7.9M176.5,131.2l6.7,-10.5M120.1,101.4l-5.4,-8.6M131.4,55.7l-3.0,-9.9M162.3,90.3l-1.0,-5.8M134.3,125.0l-10.4,-3.8M161.1,51.0l0.4,-7.8M189.0,92.4l3.4,-10.0M119.5,75.7l-5.0,-5.9M182.9,97.9l1.9,-8.7M167.4,108.3l-2.0,-10.4M182.7,124.2l2.7,-9.6M176.0,127.8l2.1,-6.0M187.6,116.2l8.5,-8.4M180.8,85.7l0.0,-5.8M195.2,97.7l3.5,-9.8M166.8,133.5l1.3,-6.1M194.4,113.4l10.6,-7.5M171.8,130.0l4.9,-11.5M156.4,82.1l-3.0,-10.8M157.4,103.2l1.1,-8.3" stroke="#cdbba2" stroke-width="0.90" stroke-opacity="0.72" fill="none"/>
<path d="M146.9,91.3l-4.3,-6.4M144.4,48.8l-3.1,-12.1M167.5,114.0l-1.0,-11.0M160.7,108.8l-0.7,-7.5M143.8,103.8l-1.9,-4.7M159.8,82.0l0.2,-8.0M123.7,75.3l-6.3,-9.2M121.6,80.5l-4.2,-10.4M121.1,70.8l-2.2,-6.0M181.0,55.3l0.5,-5.5M195.7,88.4l4.2,-10.6M177.2,124.8l1.2,-11.5M115.3,92.7l-3.7,-4.5M198.2,90.6l2.4,-6.6M158.5,60.2l1.7,-9.3M173.6,111.5l2.9,-8.5M196.1,93.4l3.7,-4.3M201.8,87.5l4.7,-8.3M149.6,123.0l-2.1,-5.5M120.1,93.9l-4.9,-4.1M172.2,66.3l-0.7,-6.5M179.5,124.7l7.2,-8.2M144.3,58.6l-3.5,-8.9M148.8,69.3l-3.2,-8.4" stroke="#cdbba2" stroke-width="0.65" stroke-opacity="0.72" fill="none"/>
<path d="M152.4,68.3l-1.6,-6.1M121.1,81.9l-4.4,-5.2M191.5,108.6l8.4,-7.5M120.7,89.7l-6.5,-6.7M189.6,93.5l0.9,-5.0M152.7,110.5l-2.4,-8.9M135.9,77.8l-2.4,-8.9M134.4,53.2l-4.9,-7.3M169.8,105.9l-1.7,-7.9M180.0,81.8l-0.4,-12.5M204.1,88.4l3.2,-5.5M162.3,53.8l1.4,-8.6M163.9,99.3l1.6,-10.6M186.7,95.9l4.3,-7.8M196.5,68.2l4.0,-11.6M179.2,113.2l0.8,-12.4M198.9,82.5l6.9,-7.3M189.8,79.9l2.5,-8.1M150.9,71.7l-0.8,-11.7M172.0,101.4l2.3,-5.2M192.5,113.3l5.1,-4.7" stroke="#d2c2aa" stroke-width="0.40" stroke-opacity="0.72" fill="none"/>
<path d="M155.3,96.0l-3.6,-6.3M145.2,123.7l-4.4,-5.0M141.0,90.0l-2.5,-4.5M173.4,130.1l3.0,-5.3M165.9,91.9l0.1,-7.0M136.4,97.5l-5.4,-5.6M194.5,89.7l2.8,-7.9M197.4,100.5l8.0,-9.5M135.4,61.2l-2.2,-4.8M146.9,129.0l-10.7,-6.0M169.4,55.1l-0.8,-7.6M136.5,123.6l-10.6,-6.7M130.8,93.8l-4.6,-9.2M197.5,72.0l0.9,-11.6M155.0,84.3l-0.9,-10.4M188.6,116.6l6.8,-5.1M130.1,88.0l-4.0,-11.9M184.0,117.9l3.7,-5.4M202.7,94.2l6.4,-10.1M185.2,113.8l6.6,-6.3M130.4,79.0l-7.4,-10.5M121.4,104.4l-3.3,-5.3M161.0,70.3l0.5,-5.7M168.7,92.3l-1.2,-6.5M168.3,106.2l1.7,-6.7M201.1,84.5l3.1,-6.0M139.6,107.3l-7.5,-6.0" stroke="#cdbba2" stroke-width="0.40" stroke-opacity="0.72" fill="none"/>
<path d="M141.2,92.6l-1.6,-7.5M195.9,104.5l7.8,-6.7M190.9,83.8l0.8,-12.4M141.6,111.6l-5.8,-4.5M154.5,67.5l-0.9,-8.4M159.0,78.5l-0.3,-7.9M160.4,110.3l-5.6,-11.3M164.4,63.9l-3.2,-11.8M127.7,82.9l-4.1,-7.0M137.8,119.6l-7.3,-9.3M148.4,83.5l0.3,-7.6M178.5,93.5l3.8,-8.8M176.1,129.3l1.9,-12.2M149.3,65.6l-6.0,-10.0M173.1,69.3l-1.3,-10.0M171.9,70.7l-1.4,-5.7M127.5,87.3l-5.4,-7.1" stroke="#d2c2aa" stroke-width="0.90" stroke-opacity="0.72" fill="none"/>
<path d="M137.4,107.4l-3.0,-10.4M196.2,85.5l3.1,-8.9M142.2,118.4l-2.4,-6.7M156.3,134.0l-2.0,-9.2M189.6,84.0l1.2,-6.6M158.0,100.0l-0.5,-10.1M145.2,71.0l-6.7,-10.4M187.3,55.0l0.3,-5.9M188.9,103.0l2.7,-10.8M203.3,102.3l3.6,-10.2M160.1,118.1l-2.4,-8.7M201.5,78.4l2.5,-11.0M130.4,70.7l-4.5,-6.6M129.2,73.5l-3.8,-8.1M166.9,62.7l0.7,-9.5M193.3,110.4l5.6,-6.8M173.1,56.6l0.5,-9.5M134.1,84.9l-4.0,-9.5M147.5,71.3l-3.0,-5.4M196.8,92.2l8.7,-8.0M137.0,115.2l-7.0,-7.7M159.3,105.8l-1.0,-6.3M154.2,97.0l-2.0,-6.9M180.2,52.7l3.3,-10.6M160.8,80.6l-2.6,-6.4M160.7,98.4l0.1,-7.7M164.9,94.3l-3.3,-10.9" stroke="#b9a58c" stroke-width="0.40" stroke-opacity="0.72" fill="none"/>
<path d="M149.4,106.9l-5.1,-9.5M158.8,103.4l-1.2,-5.2M160.9,81.0l-2.1,-5.1M154.1,134.3l-4.2,-7.2M189.6,83.6l3.7,-9.8M180.2,90.2l5.2,-11.7M156.9,60.5l-3.1,-9.6M140.9,66.5l-4.1,-9.1M179.9,68.6l-1.4,-12.4M157.6,71.8l1.3,-8.8M133.8,78.8l-2.5,-5.7M183.5,62.7l5.0,-9.4M193.5,115.3l3.9,-3.7M131.4,70.0l-8.5,-9.5M148.9,48.4l-5.0,-10.9M177.2,130.9l3.6,-8.8M132.7,84.1l-2.8,-4.7M190.9,61.9l0.1,-7.2M175.3,65.7l-1.0,-10.5M130.4,92.1l-6.5,-6.7M169.5,94.6l2.5,-11.9" stroke="#c4b097" stroke-width="0.65" stroke-opacity="0.72" fill="none"/>
<path d="M187.7,67.6l4.7,-10.5M145.2,81.7l-3.5,-12.1M174.6,129.7l2.7,-5.0M142.8,124.6l-6.9,-7.3M203.4,92.4l4.5,-9.5M167.6,104.5l0.1,-12.1M193.3,92.6l4.2,-4.5M135.1,69.9l-3.1,-11.1M158.4,59.8l-1.6,-5.6M182.9,92.2l1.1,-10.9M174.7,93.1l1.5,-6.1M159.8,111.0l-0.1,-12.6M156.3,76.8l-3.4,-11.2M153.5,96.1l-3.6,-9.5M172.3,72.7l2.6,-10.2M130.5,74.0l-1.0,-7.8M138.5,98.3l-8.0,-9.9M160.0,68.8l1.6,-10.1M123.9,99.3l-7.8,-10.1M137.2,81.9l-2.1,-7.8M190.2,93.9l3.6,-3.9" stroke="#b9a58c" stroke-width="0.90" stroke-opacity="0.72" fill="none"/>
<path d="M161.1,127.4l-0.2,-7.3M175.5,89.7l-1.1,-11.2M181.0,116.7l1.8,-8.8M194.8,76.3l-0.3,-7.2M163.8,89.4l1.9,-5.7M128.3,95.3l-4.4,-6.0M124.5,83.8l-4.4,-4.4M159.9,102.8l-2.7,-10.3M146.8,110.8l-4.9,-4.1M165.2,78.4l-3.7,-9.6M174.1,108.3l1.0,-4.9M181.3,97.1l2.4,-7.5M195.3,99.5l2.2,-6.2" stroke="#554a42" stroke-width="0.70" stroke-opacity="0.60" fill="none"/>
<path d="M142.2,56.9l-0.0,-8.5M124.2,102.1l-6.7,-5.2M189.4,100.8l4.4,-5.9M169.4,70.9l-0.9,-8.4M146.7,118.3l-1.0,-6.4M146.3,96.0l0.3,-9.8M124.0,83.1l-0.9,-5.5M157.6,69.2l-2.6,-6.3M141.2,74.2l-3.3,-5.5M133.7,98.7l-3.1,-9.8M161.9,126.5l-4.8,-8.2M132.2,85.4l-1.4,-10.2M171.9,54.9l-1.0,-6.3M140.4,73.7l-0.8,-6.4M183.3,120.4l1.5,-5.5M136.7,111.9l-6.9,-5.5M126.7,97.6l-6.3,-7.4M185.1,102.4l-0.4,-10.5M123.0,93.6l-4.7,-7.4" stroke="#4a4038" stroke-width="0.50" stroke-opacity="0.60" fill="none"/>
<path d="M139.2,104.2l-3.3,-11.0M143.4,111.8l-1.2,-9.8M171.9,70.8l-2.3,-11.0M174.3,119.9l-0.4,-10.2M145.5,118.7l-3.7,-6.2M163.1,121.6l0.8,-7.6M162.7,104.8l2.6,-8.3M148.7,93.5l-4.5,-11.1M138.5,61.1l-3.2,-7.0M136.2,84.4l-3.7,-7.6M166.2,123.4l2.4,-10.3M187.5,71.5l-0.2,-5.4M150.9,57.3l-2.2,-6.4" stroke="#554a42" stroke-width="0.50" stroke-opacity="0.60" fill="none"/>
<path d="M175.6,97.8l4.8,-7.7M130.2,89.7l-8.4,-8.0M186.7,111.5l1.1,-9.5M166.4,82.6l0.5,-7.9M173.4,99.5l1.7,-5.4M156.3,97.2l-1.5,-6.8M185.6,71.0l0.1,-8.5M183.1,75.1l3.5,-7.9M149.7,68.1l-1.2,-6.6M162.0,107.8l-0.7,-11.5M148.3,88.5l-3.6,-9.0M168.3,51.9l-0.5,-9.6" stroke="#3e3630" stroke-width="0.90" stroke-opacity="0.60" fill="none"/>
<path d="M161.7,58.4l-1.4,-4.9M140.3,60.8l-4.7,-11.0M177.1,125.0l6.4,-7.1M130.3,113.1l-4.1,-5.9M155.2,90.1l0.2,-10.2M180.7,119.2l5.9,-5.0" stroke="#4a4038" stroke-width="0.70" stroke-opacity="0.60" fill="none"/>
<path d="M160.5,99.5l-2.2,-4.8M152.0,102.4l-4.6,-7.4M157.1,96.0l-3.5,-10.5M143.3,120.1l-7.6,-6.5M160.5,78.0l-2.8,-5.2M170.0,103.6l3.3,-11.0M189.5,73.4l7.0,-9.6M133.2,114.8l-2.7,-5.2M187.1,118.3l4.1,-9.6M164.6,99.1l-0.7,-5.9M148.0,111.8l-2.6,-5.0M191.1,101.2l5.1,-6.6M150.6,65.9l-1.3,-11.9M178.3,94.1l1.0,-6.3M175.7,123.5l0.2,-6.0M173.3,106.0l5.3,-9.5" stroke="#4a4038" stroke-width="0.90" stroke-opacity="0.60" fill="none"/>
<path d="M128.9,92.7l-1.9,-5.9M121.6,84.3l-4.0,-3.1M194.7,96.4l3.1,-11.5M144.6,72.3l-0.1,-8.2M146.8,76.4l-3.1,-6.1M166.3,119.5l-3.2,-10.6M180.4,62.4l-2.4,-10.1M163.0,116.1l-2.2,-4.7M170.0,80.4l0.3,-5.9M162.9,98.3l2.2,-11.4M136.0,83.8l-6.9,-7.7M137.2,108.0l-4.7,-8.5M175.6,82.0l5.2,-8.5M166.4,86.7l1.1,-11.7M160.6,124.5l-4.9,-9.3" stroke="#3e3630" stroke-width="0.50" stroke-opacity="0.60" fill="none"/>
<path d="M186.7,106.3l7.5,-9.2M168.4,102.6l1.6,-5.4M147.2,122.8l-1.5,-8.0M162.1,107.9l1.3,-9.4M126.3,111.3l-3.8,-5.7M139.7,68.7l-4.9,-7.9M175.8,96.0l2.5,-6.5M137.3,98.6l-2.2,-6.7M148.4,70.2l-5.7,-8.5M137.3,75.0l-4.2,-10.0M190.5,78.9l-0.4,-7.3" stroke="#3e3630" stroke-width="0.70" stroke-opacity="0.60" fill="none"/>
<path d="M141.6,117.4l-1.9,-5.8M163.4,125.4l0.3,-5.3M179.5,60.5l2.6,-4.7M136.2,116.8l-9.6,-6.3M166.6,77.7l4.4,-11.1" stroke="#554a42" stroke-width="0.90" stroke-opacity="0.60" fill="none"/>
<path d="M238.4,17.4l0.2,-5.8M243.0,20.1l-2.3,-11.4M249.4,65.5l-0.2,-12.0M250.7,34.8l-1.5,-11.5M230.5,37.3l-2.7,-4.4M243.2,33.7l-1.3,-6.0M239.3,53.3l-1.8,-4.8M258.2,57.2l1.8,-6.4M238.8,57.8l-0.5,-12.0M260.7,30.9l-0.2,-8.0M229.1,57.5l-2.3,-5.4" stroke="#b9a58c" stroke-width="0.90" stroke-opacity="0.72" fill="none"/>
<path d="M237.6,41.7l-5.2,-7.4M221.0,43.8l-2.6,-5.6M232.0,49.3l-3.5,-10.6M219.8,43.5l-2.9,-5.1M242.3,45.0l-0.3,-6.7M248.0,27.3l-2.4,-6.4M242.7,59.3l-2.8,-11.3M243.6,53.6l-3.1,-5.1M229.1,58.5l-3.8,-4.9" stroke="#a8947c" stroke-width="0.90" stroke-opacity="0.72" fill="none"/>
<path d="M236.1,19.1l0.3,-5.5M244.5,32.8l-1.6,-7.7M245.0,33.6l0.3,-7.8M235.2,52.0l-3.7,-6.1M226.6,30.7l-2.2,-11.0M257.8,41.7l0.5,-5.6M252.2,52.3l-2.7,-8.3M249.5,32.6l-2.6,-9.7M232.7,39.6l-3.6,-9.1M250.6,43.4l-3.9,-10.3M255.3,31.0l1.7,-11.3M250.1,59.9l3.3,-11.5M246.6,41.8l-0.3,-10.1M244.5,31.1l-4.2,-9.6M239.4,32.9l-0.8,-10.4M231.6,19.8l-3.5,-5.7M222.0,54.4l-2.5,-6.1" stroke="#bfa98e" stroke-width="0.90" stroke-opacity="0.72" fill="none"/>
<path d="M239.6,19.5l-0.1,-5.6M229.3,38.4l-1.7,-6.9M234.9,60.6l-6.8,-9.7M248.5,9.3l-1.8,-11.8M222.8,55.4l-3.5,-9.8M222.9,37.6l-4.3,-9.7M257.0,45.7l0.0,-7.8M254.3,55.4l-0.7,-8.0M227.3,21.0l-0.8,-5.9M232.4,62.3l-6.0,-5.2M226.6,58.9l-3.3,-5.2M223.0,45.1l-1.9,-5.0M230.0,63.9l-5.3,-4.4" stroke="#c4b097" stroke-width="0.90" stroke-opacity="0.72" fill="none"/>
<path d="M252.2,22.7l-1.3,-5.5M247.8,51.2l-0.2,-7.3M261.0,43.5l-0.2,-8.6M225.4,49.8l-4.2,-6.0M249.3,65.0l-0.9,-8.7M224.7,33.6l-3.4,-10.8M231.9,57.7l-5.6,-8.8M241.3,28.0l2.2,-9.7M249.6,13.0l-1.7,-8.8" stroke="#b9a58c" stroke-width="0.40" stroke-opacity="0.72" fill="none"/>
<path d="M236.7,35.4l-4.9,-10.6M224.5,58.8l-5.2,-8.4M253.7,37.1l-1.7,-6.0M226.8,60.0l-3.6,-4.3M253.4,14.9l-1.9,-7.3M250.5,65.2l-0.2,-9.9M233.4,36.5l-5.1,-9.3M242.9,45.6l-3.1,-5.3M262.5,47.9l0.2,-11.1" stroke="#cdbba2" stroke-width="0.65" stroke-opacity="0.72" fill="none"/>
<path d="M219.5,27.5l-1.5,-10.0M245.6,9.7l-2.4,-11.5M242.1,61.7l-2.7,-10.8M257.6,17.5l-0.3,-7.2M254.2,58.2l-0.4,-7.9M228.6,39.7l-1.0,-11.7M235.4,42.1l-2.8,-11.2" stroke="#94826e" stroke-width="0.90" stroke-opacity="0.72" fill="none"/>
<path d="M241.5,47.5l-2.6,-4.7M256.1,49.9l-0.4,-9.2M258.3,33.8l3.2,-7.8M236.6,48.5l-4.1,-6.2M221.7,21.6l-2.0,-6.4M237.9,44.8l-2.8,-8.0M219.2,37.9l-2.5,-9.9M243.1,61.0l-0.0,-7.0M260.3,51.6l-1.0,-10.4M251.2,23.4l0.5,-10.9" stroke="#d2c2aa" stroke-width="0.90" stroke-opacity="0.72" fill="none"/>
<path d="M223.7,27.0l-5.9,-8.4M259.1,36.7l-0.5,-10.8M223.4,23.7l-1.0,-11.7M228.4,44.1l-3.0,-11.3M248.7,39.3l3.6,-11.2" stroke="#b9a58c" stroke-width="0.65" stroke-opacity="0.72" fill="none"/>
<path d="M256.0,37.8l1.2,-5.6M247.3,64.5l-3.1,-6.4M223.9,19.5l-3.7,-6.6M235.9,41.6l-2.0,-9.9M241.9,67.5l-2.6,-5.1M247.3,38.4l-3.4,-9.2M254.1,46.0l-2.3,-9.8M249.2,46.8l-1.0,-7.3M224.2,41.6l-3.8,-5.7" stroke="#94826e" stroke-width="0.40" stroke-opacity="0.72" fill="none"/>
<path d="M239.6,30.5l-3.4,-8.6M228.0,35.2l-6.1,-6.9M248.8,64.2l-2.7,-8.3M226.3,37.8l-7.3,-8.6M257.6,21.5l0.5,-5.7M252.6,62.9l0.3,-6.0M247.8,25.9l1.8,-6.6M219.0,40.8l-2.1,-7.7M221.9,32.3l-3.3,-4.4" stroke="#c4b097" stroke-width="0.40" stroke-opacity="0.72" fill="none"/>
<path d="M245.4,64.6l-3.1,-6.4M239.5,30.3l-6.0,-9.4M228.2,60.7l-3.9,-5.9M259.2,38.5l-0.6,-6.9M236.3,39.5l0.2,-8.7M226.8,55.5l-4.3,-10.4M226.8,15.3l-2.9,-5.4M236.4,23.0l0.0,-6.2M227.2,54.8l-3.4,-5.6M252.5,33.7l3.0,-7.3" stroke="#c4b097" stroke-width="0.65" stroke-opacity="0.72" fill="none"/>
<path d="M232.8,30.8l-4.8,-10.5M257.1,38.6l-1.3,-5.6M231.8,11.2l-1.9,-11.6M251.8,51.3l3.2,-10.0M240.1,10.8l-3.6,-9.6M258.2,24.1l1.8,-9.9M244.3,26.3l-0.5,-5.7M232.2,20.3l-1.7,-10.1M256.8,20.4l0.7,-5.7M244.6,35.8l0.1,-11.2" stroke="#d2c2aa" stroke-width="0.65" stroke-opacity="0.72" fill="none"/>
<path d="M247.0,12.0l-3.0,-11.1M250.1,47.3l0.5,-9.6M230.8,10.5l-0.6,-10.3M232.3,10.4l0.1,-5.4M232.9,26.4l-2.3,-5.7M237.3,65.5l-5.0,-9.1M228.7,63.5l-9.5,-5.7M222.8,36.5l-2.8,-11.0M260.4,51.5l2.0,-5.9M259.8,40.8l-0.4,-7.6" stroke="#bfa98e" stroke-width="0.65" stroke-opacity="0.72" fill="none"/>
<path d="M248.4,34.5l3.4,-9.9M241.0,32.2l-1.7,-5.7M250.2,58.0l2.7,-10.2M228.8,58.0l-8.8,-6.4M228.1,43.1l-5.0,-6.0M232.6,9.7l-3.3,-5.6M239.5,26.6l0.4,-6.8M242.5,30.2l0.2,-8.3M256.5,37.9l-0.9,-11.7M229.8,48.0l-1.7,-4.9M247.4,32.9l-2.9,-6.4M239.3,30.9l-0.3,-6.5" stroke="#cdbba2" stroke-width="0.40" stroke-opacity="0.72" fill="none"/>
<path d="M231.4,13.7l-1.4,-11.2M244.8,62.0l-3.2,-10.8M234.4,56.5l-4.7,-4.9M252.5,49.2l-0.3,-7.0M232.5,57.3l-4.8,-6.3" stroke="#a8947c" stroke-width="0.65" stroke-opacity="0.72" fill="none"/>
<path d="M221.9,39.1l-8.7,-7.0M255.7,51.7l4.3,-10.0M227.8,50.9l-6.8,-8.7M240.7,7.8l2.1,-9.8M222.8,27.2l-6.0,-8.2M257.8,34.6l0.2,-5.7M225.6,35.4l-4.5,-8.1M236.2,56.7l-2.2,-7.8M261.6,45.4l3.6,-8.9M250.8,45.9l-1.4,-6.1" stroke="#bfa98e" stroke-width="0.40" stroke-opacity="0.72" fill="none"/>
<path d="M224.0,58.0l-5.0,-4.0M256.4,22.1l2.8,-8.8M237.1,36.8l-0.2,-5.2M220.4,42.2l-4.4,-3.8M237.6,18.1l-5.3,-10.4M256.4,45.8l0.9,-6.4M242.5,66.3l-6.0,-8.8" stroke="#94826e" stroke-width="0.65" stroke-opacity="0.72" fill="none"/>
<path d="M238.0,60.3l-3.1,-10.5M226.0,25.1l-5.8,-6.6M242.0,67.5l-2.8,-4.1M240.9,33.2l0.9,-10.6M240.2,32.7l-0.4,-10.9M229.1,46.2l-4.2,-4.1M233.9,29.7l0.5,-7.0M251.0,21.9l-0.8,-6.4M233.4,38.8l-2.4,-8.1" stroke="#a8947c" stroke-width="0.40" stroke-opacity="0.72" fill="none"/>
<path d="M238.8,56.4l-0.2,-8.7M232.4,17.5l-2.8,-8.6M262.1,40.7l-0.4,-11.7M245.3,52.9l-1.2,-6.6M255.0,58.5l1.5,-5.5M249.9,52.4l-1.0,-11.2M236.0,67.9l-2.4,-6.7" stroke="#cdbba2" stroke-width="0.90" stroke-opacity="0.72" fill="none"/>
<path d="M246.0,10.4l-3.0,-9.2M227.7,51.0l-3.0,-5.9M238.7,15.6l-5.3,-9.3M241.9,37.3l1.0,-8.8M241.7,26.1l-0.6,-11.8M258.0,24.7l3.9,-10.7M257.7,18.5l-0.2,-10.4M236.5,52.7l-5.5,-6.3M256.5,40.1l2.5,-7.8M231.8,22.4l0.5,-6.8M250.4,16.7l1.1,-9.9M232.4,37.9l-3.0,-11.5" stroke="#d2c2aa" stroke-width="0.40" stroke-opacity="0.72" fill="none"/>
<path d="M242.1,16.2l-1.1,-6.4M240.2,46.5l-1.4,-5.2M238.3,60.1l-1.8,-7.9M259.9,37.8l2.9,-4.8M226.5,35.0l-1.4,-6.4M235.4,61.5l-2.8,-6.4M239.9,16.2l0.2,-8.3M237.5,59.4l-3.1,-5.6M239.1,45.0l-5.2,-7.9M245.9,52.8l-0.9,-8.7" stroke="#4a4038" stroke-width="0.50" stroke-opacity="0.55" fill="none"/>
<path d="M245.3,23.2l-0.9,-9.0M247.6,24.1l-0.5,-5.0M239.2,54.3l-3.0,-5.0M237.1,23.5l-1.9,-5.0M233.5,27.9l-5.4,-7.2M242.6,32.3l1.3,-5.5M237.1,42.9l-2.0,-5.1M258.8,44.9l2.6,-7.2M250.9,25.1l-3.5,-8.1M254.9,39.0l3.7,-6.5" stroke="#554a42" stroke-width="0.50" stroke-opacity="0.55" fill="none"/>
<path d="M253.2,53.0l-0.9,-6.2M232.3,54.9l-2.5,-4.6M225.2,44.5l-2.0,-6.2" stroke="#3e3630" stroke-width="0.90" stroke-opacity="0.55" fill="none"/>
<path d="M227.0,35.4l-6.3,-5.9M251.7,31.0l1.4,-9.3M231.7,39.6l-2.6,-6.0" stroke="#4a4038" stroke-width="0.90" stroke-opacity="0.55" fill="none"/>
<path d="M231.8,43.5l-1.8,-8.2M234.2,42.8l-4.7,-5.9M226.2,47.5l-1.0,-7.0M255.7,48.3l-2.1,-8.0M248.1,38.4l-2.1,-8.4M250.7,26.2l1.4,-4.9M230.0,43.3l-1.9,-9.0M245.8,20.6l-3.0,-6.2" stroke="#554a42" stroke-width="0.70" stroke-opacity="0.55" fill="none"/>
<path d="M231.6,51.4l-5.3,-7.2M238.7,18.2l-2.8,-5.3M247.9,20.1l3.0,-7.5M255.5,44.3l0.6,-8.6" stroke="#3e3630" stroke-width="0.50" stroke-opacity="0.55" fill="none"/>
<path d="M229.7,55.2l-2.5,-6.3M238.6,19.3l-5.0,-8.1M254.0,29.7l4.6,-8.3M240.2,40.9l1.2,-6.0" stroke="#4a4038" stroke-width="0.70" stroke-opacity="0.55" fill="none"/>
<path d="M224.7,44.3l-2.7,-5.8M256.2,25.0l-0.5,-9.2M248.0,15.6l1.5,-8.6M239.7,35.3l1.0,-7.7M249.9,57.4l-2.6,-6.6" stroke="#3e3630" stroke-width="0.70" stroke-opacity="0.55" fill="none"/>
<path d="M246.9,33.3l2.8,-8.3M228.8,53.5l-1.0,-6.5M225.3,33.4l-2.6,-8.9" stroke="#554a42" stroke-width="0.90" stroke-opacity="0.55" fill="none"/>
<path d="M83.9,144.1l5.6,-17.1M53.9,130.2l-1.2,-12.5M106.9,179.2l3.1,-14.2M49.5,157.4l-5.3,-9.6M70.9,147.6l-7.2,-9.7M130.2,176.0l-1.9,-9.3M84.5,138.0l-0.4,-7.6M96.8,175.9l-5.3,-12.5M71.7,155.5l1.5,-11.6M87.2,191.0l-4.0,-9.7M141.6,131.9l6.5,-6.3M145.2,162.7l9.9,-10.4M62.3,146.0l-9.5,-11.8M82.8,128.7l-0.9,-9.9M107.2,170.7l-3.9,-13.9M143.6,137.1l8.5,-8.1M96.2,142.6l2.1,-15.6" stroke="#a89a8c" stroke-width="0.40" stroke-opacity="0.75" fill="none"/>
<path d="M118.3,194.6l3.2,-14.8M113.5,120.3l-5.7,-14.3M95.8,176.7l-6.2,-9.0M90.1,173.1l4.2,-17.2M96.5,136.5l0.1,-7.9M79.5,163.3l-4.1,-8.6M123.4,142.7l7.1,-14.4M113.5,182.4l4.0,-6.1M71.2,194.4l-4.2,-15.8M43.1,164.6l-1.5,-7.3M90.5,198.3l-7.5,-7.6M69.1,158.4l-4.5,-8.2M85.5,179.0l-1.1,-6.9M138.8,143.9l7.7,-15.4M76.0,118.9l2.0,-12.9M88.8,120.7l-0.3,-7.4M145.8,147.5l7.0,-5.7M44.0,170.1l-4.4,-6.9M117.4,144.9l4.5,-10.4M69.7,149.3l-9.1,-10.1M62.8,181.0l-0.3,-9.6" stroke="#a89a8c" stroke-width="0.65" stroke-opacity="0.75" fill="none"/>
<path d="M108.3,161.3l-0.2,-16.8M136.0,165.3l6.1,-9.3M111.9,181.2l1.6,-5.9M136.4,144.0l4.3,-17.4M64.1,126.5l2.6,-10.9M74.7,128.0l-3.8,-4.9M50.5,147.4l-0.6,-7.7M150.6,153.2l5.4,-15.8M126.7,174.6l10.7,-14.2M64.7,175.3l-9.2,-11.0M127.9,146.8l-3.1,-9.5M56.0,167.0l-8.1,-15.0M124.5,146.8l5.1,-13.3M95.6,129.3l-1.9,-8.1M87.9,197.2l1.3,-9.3" stroke="#d2c6b6" stroke-width="0.90" stroke-opacity="0.75" fill="none"/>
<path d="M136.2,149.6l9.0,-9.0M85.7,158.7l-0.8,-16.8M132.7,139.5l3.5,-5.1M60.9,150.0l0.3,-9.1M124.2,156.4l-6.9,-15.7M101.5,184.2l1.1,-11.1M67.9,191.8l-1.7,-11.0M70.1,143.4l-10.8,-12.2M39.9,154.1l-10.4,-4.9M39.3,173.3l-1.5,-6.0M126.4,164.1l7.5,-12.2M128.8,160.1l4.2,-5.3M126.0,160.6l2.9,-17.0" stroke="#b4a698" stroke-width="0.40" stroke-opacity="0.75" fill="none"/>
<path d="M58.4,130.4l-6.3,-11.6M107.9,121.0l7.9,-11.9M54.9,164.4l-4.4,-14.1M93.3,155.8l-6.9,-7.6M127.7,131.1l0.7,-7.0M76.3,181.1l-2.9,-10.7M135.9,127.6l2.1,-15.4M115.8,119.0l-3.5,-9.0M54.2,171.9l-13.2,-9.1M75.4,179.5l-10.1,-12.4M101.9,176.6l0.8,-8.2M91.6,135.0l2.1,-6.2M104.3,121.8l-2.0,-6.9M102.7,122.7l-4.2,-16.5M112.7,185.0l4.6,-7.6" stroke="#d0c4b6" stroke-width="0.90" stroke-opacity="0.75" fill="none"/>
<path d="M88.7,184.9l-3.4,-11.1M102.6,185.2l-9.6,-14.8M96.0,125.6l2.9,-5.8M148.1,146.5l9.7,-6.9M73.9,139.5l-1.3,-14.3M99.3,151.0l-0.9,-7.0M78.4,179.7l-8.4,-6.4M95.6,137.5l-5.4,-7.8M55.9,155.5l-0.4,-6.3M90.9,137.8l-9.8,-14.0M42.7,138.4l-13.0,-6.6M99.8,163.4l3.1,-8.1M100.5,147.6l6.8,-16.0M72.4,148.5l-2.1,-11.7M115.5,123.3l-6.1,-11.3M81.8,126.4l-0.9,-14.9M48.2,148.9l-4.7,-4.7M124.4,181.3l-3.9,-15.2M45.7,166.3l-12.7,-5.7M146.6,149.9l9.4,-6.7M102.7,186.2l-2.5,-13.3M44.7,170.5l-4.1,-7.0M119.6,135.3l4.5,-11.0M117.7,144.7l4.3,-13.4M53.0,185.5l-3.1,-9.1" stroke="#c4b8aa" stroke-width="0.40" stroke-opacity="0.75" fill="none"/>
<path d="M101.1,195.8l-3.8,-7.1M87.1,174.0l-4.2,-5.6M146.1,143.5l2.3,-14.3M125.0,191.7l-2.2,-17.8M103.8,172.3l2.2,-7.1M141.1,138.6l7.1,-13.1M42.0,166.7l-2.0,-17.0M113.9,196.9l2.2,-7.8M91.7,159.0l-9.5,-11.3M101.3,123.0l3.3,-11.7M92.8,144.1l-4.1,-8.7M73.4,192.6l-1.1,-9.6M98.2,167.0l-8.2,-15.4M122.9,138.4l4.8,-16.5M126.7,140.2l-0.7,-13.2M135.0,163.2l5.0,-13.9M115.6,148.9l-3.4,-14.4M55.8,130.8l-7.6,-9.2M84.2,139.1l-4.6,-7.7" stroke="#b4a698" stroke-width="0.90" stroke-opacity="0.75" fill="none"/>
<path d="M91.5,144.3l-2.9,-12.8M108.4,173.2l1.6,-14.0M147.1,144.4l9.5,-8.4M93.7,142.8l0.2,-10.5M93.4,175.0l2.4,-8.3M77.0,129.4l-3.0,-7.4M63.1,158.2l-8.1,-10.1M107.6,171.6l1.2,-15.6M98.6,177.1l-5.0,-10.3M121.2,191.6l1.2,-15.9M142.3,151.5l9.7,-8.3M72.8,182.3l-3.4,-14.4M116.3,169.2l3.5,-5.5M62.3,135.2l-2.0,-12.0M43.2,166.4l-5.6,-6.2M52.4,147.8l-0.4,-14.4M120.6,127.4l0.2,-16.2M91.7,171.1l0.7,-16.1M78.8,191.7l-9.3,-5.0M92.7,193.2l-6.4,-12.8M47.2,163.2l-2.5,-6.0M83.0,142.8l-7.9,-10.1M85.1,169.5l-9.7,-11.0M54.6,138.5l-10.2,-5.6M88.2,188.4l-5.6,-15.6M135.0,176.4l7.8,-5.8M55.4,158.4l-4.6,-12.4M99.8,171.9l-2.1,-7.1" stroke="#b4a698" stroke-width="0.65" stroke-opacity="0.75" fill="none"/>
<path d="M115.1,134.5l0.7,-11.8M110.2,171.6l-7.2,-12.5M108.9,131.9l-3.4,-11.8M44.1,146.7l-12.2,-12.3M93.7,190.8l-3.1,-16.0M99.8,147.6l3.7,-13.0M101.3,162.4l2.1,-13.4M65.2,135.5l0.7,-11.3M57.6,170.4l-16.1,-7.4M91.8,194.9l-0.1,-10.1M92.3,120.0l2.1,-9.2M135.0,171.3l13.4,-10.5M87.1,194.2l-3.5,-14.2M70.7,132.5l-5.1,-8.6M101.1,139.8l2.0,-10.1M46.8,135.2l-8.0,-6.3M116.4,171.0l-4.9,-8.6M77.7,122.9l3.0,-8.0M66.4,155.5l-5.4,-3.8M128.7,143.2l3.4,-6.4M126.7,153.8l-2.8,-8.0M122.8,153.1l-1.1,-6.2M132.0,160.0l-0.7,-13.4M59.5,151.2l-5.0,-9.6M112.9,147.3l-3.5,-16.5M60.0,149.2l-3.0,-9.3" stroke="#c4b8aa" stroke-width="0.65" stroke-opacity="0.75" fill="none"/>
<path d="M133.1,129.3l7.9,-9.9M120.0,143.8l1.5,-17.2M40.3,145.3l-15.2,-7.9M135.3,184.8l1.7,-10.8M72.9,126.1l-5.2,-4.1M136.4,167.0l4.8,-6.8M106.7,136.8l7.6,-13.8M135.7,139.2l-0.5,-7.4M58.0,177.5l-5.0,-3.8M75.5,167.8l-6.6,-15.6M95.2,170.2l-3.3,-6.2M74.4,157.2l-2.4,-16.6M142.3,160.8l7.9,-14.1M62.5,154.7l1.1,-10.5M84.1,191.2l-5.5,-9.2M104.1,142.8l-0.1,-9.2M99.3,155.3l-9.7,-12.0M71.9,181.2l-10.1,-12.7M145.3,165.7l4.9,-8.0M80.6,132.3l-0.9,-10.4" stroke="#dad0c2" stroke-width="0.40" stroke-opacity="0.75" fill="none"/>
<path d="M84.4,173.7l-7.8,-9.8M77.9,185.3l-8.8,-7.8M136.5,179.2l2.3,-14.3M65.9,184.4l-0.8,-10.8M136.8,134.7l5.2,-12.9M41.3,169.8l-5.5,-8.4M38.1,165.7l-4.2,-5.8M99.3,134.5l-2.5,-17.3M58.9,185.1l-1.9,-14.2M53.1,157.6l-11.2,-8.4M133.3,144.5l0.6,-9.5M100.2,132.6l-8.8,-14.4M49.9,165.7l-11.2,-6.9M147.0,174.4l0.4,-6.0M73.9,144.3l-11.8,-10.7M112.7,161.7l-0.7,-15.5M147.4,176.0l5.2,-10.0M136.1,127.8l3.3,-5.7M77.7,166.7l-2.7,-6.0M84.9,160.3l-4.0,-8.0M83.7,196.2l-3.3,-11.3M66.7,133.7l-0.6,-7.0M49.9,185.7l-2.9,-5.8M92.2,192.2l0.3,-13.6" stroke="#dad0c2" stroke-width="0.90" stroke-opacity="0.75" fill="none"/>
<path d="M36.9,161.5l-5.6,-6.3M60.4,133.3l-5.0,-8.6M59.3,181.3l-8.7,-7.9M105.7,191.1l-3.5,-9.8M94.9,142.0l0.5,-6.6M118.6,146.9l-2.0,-7.2M53.6,154.6l-7.0,-7.8M101.9,183.7l3.9,-12.6M84.4,177.5l2.0,-12.0M73.3,184.9l0.1,-12.8M95.0,189.9l-3.0,-9.2" stroke="#a89a8c" stroke-width="0.90" stroke-opacity="0.75" fill="none"/>
<path d="M127.1,189.9l2.2,-5.7M89.0,124.4l-7.3,-9.4M144.9,173.7l6.2,-3.9M142.3,156.7l3.9,-6.9M72.1,119.3l-4.3,-8.1M124.8,162.2l-0.7,-14.2M45.2,164.8l-3.9,-4.8M118.1,153.4l10.6,-14.2M64.6,125.1l-7.1,-10.2M147.5,151.8l12.6,-9.9M70.9,181.9l-5.5,-14.2M94.9,181.0l-2.7,-10.1M92.6,159.3l-4.5,-9.6M135.3,176.3l7.7,-5.7M50.6,154.3l-1.9,-12.9M100.6,161.8l-7.7,-10.9M113.2,191.0l2.2,-15.2M80.3,161.6l-13.0,-10.4M73.1,170.8l-4.6,-5.8M90.6,186.6l-9.9,-11.5M102.4,152.9l-0.2,-10.7" stroke="#d2c6b6" stroke-width="0.65" stroke-opacity="0.75" fill="none"/>
<path d="M81.7,187.8l-3.4,-14.4M105.2,194.9l-6.1,-11.0M70.9,167.2l-10.0,-6.9M61.0,155.7l1.0,-10.8M95.5,146.6l2.3,-11.1M121.3,180.7l-4.1,-13.6M120.4,155.1l-2.9,-8.9M147.1,143.2l1.7,-16.4M39.7,169.1l-8.2,-6.5M118.6,189.1l-4.5,-16.4M122.7,161.5l9.2,-10.8M53.8,158.5l-6.4,-4.9M119.8,176.9l3.7,-5.1M142.7,169.0l5.4,-8.0M94.7,178.6l1.3,-6.4M104.1,170.6l3.1,-13.8M57.3,158.9l-10.8,-9.5M109.0,176.8l-0.1,-6.2M98.7,117.4l1.4,-12.8M82.9,156.2l-10.2,-9.6M116.6,196.6l4.0,-11.7M79.9,128.4l-9.0,-14.9" stroke="#d2c6b6" stroke-width="0.40" stroke-opacity="0.75" fill="none"/>
<path d="M119.4,166.8l3.0,-7.1M128.3,135.1l1.3,-16.5M94.1,168.3l-10.2,-14.8M52.3,174.7l-10.7,-6.3M61.5,172.9l-6.9,-15.2M127.5,126.2l0.7,-11.0M90.4,161.0l-5.5,-14.1M121.7,157.8l1.7,-10.2M65.0,183.0l-6.5,-4.3M83.6,127.0l-1.8,-8.8M48.2,134.5l-1.4,-12.7M59.5,176.7l-0.5,-6.7M138.0,179.2l8.9,-10.3M46.3,155.6l-1.4,-6.5M117.7,148.6l-3.8,-10.3M149.2,163.7l1.2,-6.0" stroke="#d0c4b6" stroke-width="0.40" stroke-opacity="0.75" fill="none"/>
<path d="M93.9,155.3l-0.5,-7.6M127.9,153.5l1.6,-5.9M93.5,134.3l-9.1,-13.4M86.3,146.5l3.8,-10.5M121.7,193.1l-0.3,-13.7M101.4,120.0l-0.8,-8.1M75.4,170.8l-6.1,-13.2M109.8,186.4l-6.9,-14.3M105.6,199.1l-9.9,-12.7M146.2,138.8l3.2,-12.4M116.4,180.3l-3.5,-9.3M61.2,182.7l-4.5,-10.5M49.2,146.8l-5.0,-4.2" stroke="#dad0c2" stroke-width="0.65" stroke-opacity="0.75" fill="none"/>
<path d="M134.2,157.6l5.3,-14.8M104.4,138.5l-6.6,-16.1M93.7,183.4l-9.3,-8.5M97.8,191.4l-2.3,-12.4M87.4,198.7l-3.0,-7.0M96.7,131.1l4.3,-9.8M88.2,147.4l-1.1,-8.0M117.4,153.1l0.2,-16.1M42.0,165.9l-6.5,-3.3M86.5,179.5l-0.3,-8.6M68.9,156.7l-14.1,-8.7M98.0,191.2l-3.4,-17.6M144.9,135.2l1.1,-6.2M100.0,177.8l3.1,-15.2" stroke="#d0c4b6" stroke-width="0.65" stroke-opacity="0.75" fill="none"/>
<path d="M123.3,158.4l0.2,-8.4M71.9,152.8l-13.6,-10.5M143.4,141.1l4.8,-7.3M103.4,161.7l-1.0,-13.6M131.0,153.2l12.1,-11.5M77.4,157.7l-4.7,-6.0M65.4,171.0l-3.8,-10.3M112.6,146.4l-7.2,-13.2M46.4,141.2l0.7,-10.5M135.9,154.9l6.7,-7.3" stroke="#c4b8aa" stroke-width="0.90" stroke-opacity="0.75" fill="none"/>
<path d="M70.3,157.9l-1.5,-9.8M110.1,179.7l-2.9,-10.3M107.0,156.7l4.2,-11.0M96.5,153.1l-6.3,-8.1M82.5,173.0l-2.8,-5.6M120.4,136.3l4.4,-6.3M90.2,128.2l-7.0,-9.0M91.6,180.2l0.2,-12.4M107.2,173.6l-2.5,-8.8" stroke="#3e3630" stroke-width="0.75" stroke-opacity="0.50" fill="none"/>
<path d="M77.8,144.9l-1.1,-9.3M121.0,166.6l-3.8,-7.9M123.5,173.2l4.1,-6.4M90.4,166.7l-0.5,-11.4M96.4,146.3l3.6,-8.6M35.5,156.9l-5.4,-2.9M69.8,172.6l-0.8,-12.9" stroke="#3e3630" stroke-width="0.50" stroke-opacity="0.50" fill="none"/>
<path d="M38.3,156.9l-0.2,-11.0M107.8,191.6l-6.9,-9.1M92.5,187.1l-0.7,-10.5M94.4,172.7l1.4,-11.9M114.7,178.9l-0.4,-9.4M102.7,122.4l2.2,-6.7M102.4,125.6l2.8,-12.8" stroke="#554a42" stroke-width="1.00" stroke-opacity="0.50" fill="none"/>
<path d="M140.8,152.1l-1.2,-10.3M105.9,180.4l4.8,-11.5M60.9,168.3l-8.8,-4.7M97.7,165.3l-0.4,-7.2M81.6,186.6l-4.0,-5.1M125.1,161.3l2.0,-11.6" stroke="#4a4038" stroke-width="1.00" stroke-opacity="0.50" fill="none"/>
<path d="M118.1,131.4l4.4,-9.9M88.8,190.6l-7.5,-9.7M87.3,186.4l1.6,-7.1M122.8,128.4l-3.3,-8.3M41.4,170.4l-11.6,-7.7" stroke="#4a4038" stroke-width="0.75" stroke-opacity="0.50" fill="none"/>
<path d="M75.9,136.5l0.4,-6.3M98.9,175.6l-4.7,-7.4M73.2,168.3l-0.3,-7.4M67.3,168.5l-1.6,-9.4M104.5,179.5l1.1,-13.2M106.5,134.0l0.8,-7.1M138.0,156.6l-0.4,-11.4M108.4,132.5l-0.9,-7.9" stroke="#554a42" stroke-width="0.75" stroke-opacity="0.50" fill="none"/>
<path d="M102.8,134.4l-3.3,-8.1M88.6,168.0l-9.6,-10.1M57.0,162.0l0.1,-9.5M35.4,158.5l-6.8,-8.3M97.3,131.8l-0.3,-13.4M66.5,134.5l-4.3,-11.2M67.8,179.1l-5.4,-7.2M99.1,144.3l1.8,-8.5M70.0,187.5l-8.3,-4.1M69.2,142.1l-5.9,-3.7M98.8,165.5l-4.6,-6.7" stroke="#554a42" stroke-width="0.50" stroke-opacity="0.50" fill="none"/>
<path d="M131.7,148.3l-1.8,-13.2M94.2,183.2l-1.1,-8.5M110.4,131.5l-5.8,-12.0M104.6,198.2l2.4,-6.6M111.0,196.1l-3.6,-5.9M47.5,160.1l0.9,-12.6" stroke="#3e3630" stroke-width="1.00" stroke-opacity="0.50" fill="none"/>
<path d="M60.9,189.3l-4.7,-11.3" stroke="#4a4038" stroke-width="0.50" stroke-opacity="0.50" fill="none"/>
<path d="M35.7,197.9l3.2,-8.4M17.9,210.0l-4.2,-12.8M62.2,187.7l4.0,-5.1M51.5,235.4l0.9,-8.8M70.2,204.1l1.0,-7.7M26.7,196.9l1.3,-6.7M60.7,235.6l4.6,-9.2M68.4,222.6l9.5,-11.0M69.6,196.5l6.1,-6.5M74.3,230.9l7.2,-12.8M41.7,204.4l-5.1,-9.7M88.2,218.8l8.2,-7.3" stroke="#c4b8aa" stroke-width="0.80" stroke-opacity="0.65" fill="none"/>
<path d="M61.9,244.8l10.1,-7.2M14.9,231.4l-1.0,-9.8M90.2,213.0l11.3,-7.0M55.0,220.1l6.7,-10.8" stroke="#d2c6b6" stroke-width="0.57" stroke-opacity="0.65" fill="none"/>
<path d="M45.6,232.9l-5.2,-15.0M63.9,231.4l4.3,-4.5M20.9,206.4l-3.6,-11.0M72.4,219.4l7.3,-12.1M11.6,210.1l-0.4,-10.8M65.5,236.9l6.9,-10.3M34.7,225.9l3.6,-9.2" stroke="#c4b8aa" stroke-width="0.35" stroke-opacity="0.65" fill="none"/>
<path d="M31.1,201.6l-4.3,-9.4M22.4,191.9l3.4,-10.6M44.9,227.2l-0.9,-8.4M66.6,197.6l-2.2,-15.3M53.0,236.1l4.2,-11.3M72.4,188.5l4.2,-15.3M41.2,229.3l1.4,-7.8M50.9,234.9l1.0,-9.5M71.4,232.2l3.8,-6.1M54.8,216.9l7.7,-12.5M35.0,228.5l2.7,-7.8" stroke="#d0c4b6" stroke-width="0.35" stroke-opacity="0.65" fill="none"/>
<path d="M14.9,199.5l-1.4,-6.2M26.3,202.3l-3.4,-5.8M39.2,206.2l1.2,-12.6M70.4,210.3l-2.0,-15.3M61.4,181.9l6.8,-9.1M11.3,225.4l-4.1,-4.9M72.1,194.1l5.4,-5.5M12.0,221.8l-5.2,-6.4M48.5,236.6l-0.9,-6.0M47.1,226.1l-1.6,-14.4" stroke="#d0c4b6" stroke-width="0.80" stroke-opacity="0.65" fill="none"/>
<path d="M34.6,213.9l4.0,-9.4M66.0,222.8l4.8,-4.2M44.7,209.0l-2.2,-6.4M62.5,210.6l2.3,-15.8M62.9,205.1l-3.4,-13.1M52.3,238.3l7.8,-12.3M60.8,207.2l1.3,-7.0M66.5,205.7l0.9,-7.2M60.5,229.7l-0.6,-11.1" stroke="#a89a8c" stroke-width="0.57" stroke-opacity="0.65" fill="none"/>
<path d="M63.0,233.4l-0.6,-12.5M45.1,229.1l0.3,-10.4M53.0,245.8l-0.9,-11.3M11.1,206.2l-1.3,-8.0M52.9,224.3l2.7,-6.5M23.8,219.4l-1.6,-11.1M49.5,237.4l1.1,-11.2M15.7,220.6l-6.3,-10.9M48.6,190.4l2.3,-5.6" stroke="#b4a698" stroke-width="0.35" stroke-opacity="0.65" fill="none"/>
<path d="M20.3,196.5l-5.0,-7.4M55.6,237.5l2.2,-10.9M33.6,192.1l2.7,-11.2M60.7,204.8l2.9,-6.8M74.0,188.2l-1.0,-14.3" stroke="#d2c6b6" stroke-width="0.35" stroke-opacity="0.65" fill="none"/>
<path d="M33.3,214.4l4.0,-11.8M42.6,190.3l2.1,-9.3M88.4,215.9l2.7,-8.8M40.6,231.1l-0.3,-6.8M59.3,215.8l-2.4,-11.3M79.7,231.2l1.8,-8.4M38.6,191.7l2.9,-15.4M47.4,209.1l-2.8,-6.7M24.4,201.1l-4.3,-5.4M75.0,210.1l7.1,-9.2M66.8,226.3l9.9,-8.8" stroke="#a89a8c" stroke-width="0.80" stroke-opacity="0.65" fill="none"/>
<path d="M18.6,205.8l1.6,-11.6M89.7,216.5l8.0,-7.4M79.0,216.4l7.4,-6.7M50.5,212.8l-1.2,-9.1M75.4,209.0l1.5,-12.8M36.9,187.4l-6.3,-14.7" stroke="#a89a8c" stroke-width="0.35" stroke-opacity="0.65" fill="none"/>
<path d="M67.3,245.7l7.0,-13.8M84.2,225.3l2.6,-6.8M15.0,198.5l-5.1,-12.5M48.4,246.7l-3.1,-9.7M18.7,221.9l-5.2,-10.1M29.6,241.7l-3.3,-13.4M18.7,226.0l0.5,-8.0M90.5,211.6l2.4,-13.3M83.5,228.6l4.4,-7.5M20.3,215.4l-0.7,-7.6M41.3,207.7l-0.9,-7.4M30.1,215.8l-8.0,-12.4M52.7,217.5l-1.8,-13.8" stroke="#d0c4b6" stroke-width="0.57" stroke-opacity="0.65" fill="none"/>
<path d="M26.6,187.6l-2.2,-12.3M38.2,242.8l-4.0,-8.2M45.6,222.8l-1.4,-8.3M41.7,231.7l5.1,-10.1M56.7,197.9l3.8,-10.3M8.5,217.8l-5.9,-5.6M15.1,214.0l-3.6,-5.6" stroke="#c4b8aa" stroke-width="0.57" stroke-opacity="0.65" fill="none"/>
<path d="M61.8,209.6l-1.4,-12.6M81.3,214.1l2.6,-7.8M71.3,222.7l5.4,-12.3M46.9,236.7l5.7,-9.8M85.0,214.5l2.3,-12.6M17.9,234.9l-4.7,-9.6" stroke="#d2c6b6" stroke-width="0.80" stroke-opacity="0.65" fill="none"/>
<path d="M73.3,189.0l6.5,-9.8M52.1,188.5l1.9,-7.4M83.5,234.8l11.0,-8.4M19.0,208.9l-8.9,-12.4M54.8,193.5l1.8,-10.1M73.1,230.0l0.4,-7.7" stroke="#dad0c2" stroke-width="0.57" stroke-opacity="0.65" fill="none"/>
<path d="M58.5,182.1l-3.2,-9.8M37.9,194.9l4.5,-8.7M30.6,238.5l-2.6,-14.0M48.8,217.8l-3.0,-15.5M54.5,241.0l1.5,-8.6M46.9,189.4l2.0,-6.4M58.0,211.7l0.1,-8.0" stroke="#b4a698" stroke-width="0.80" stroke-opacity="0.65" fill="none"/>
<path d="M79.1,203.9l5.0,-10.2M26.6,207.2l-1.2,-15.3M24.6,195.6l-0.3,-12.2M50.4,203.7l-0.2,-15.3M68.9,203.6l2.5,-10.6" stroke="#dad0c2" stroke-width="0.80" stroke-opacity="0.65" fill="none"/>
<path d="M30.4,196.2l-7.4,-10.9M11.3,228.0l-5.3,-7.5M58.1,191.9l-1.7,-9.7M16.2,208.7l-7.5,-8.8M36.6,232.4l-7.7,-13.8M59.1,230.1l-0.5,-16.0M54.2,248.0l2.2,-7.7M46.7,230.3l0.1,-7.2M9.0,216.4l-5.1,-6.0M28.1,217.5l-4.0,-11.5M15.1,200.5l-6.4,-8.7" stroke="#dad0c2" stroke-width="0.35" stroke-opacity="0.65" fill="none"/>
<path d="M23.9,202.3l-7.3,-9.4" stroke="#b4a698" stroke-width="0.57" stroke-opacity="0.65" fill="none"/>
<path d="M123.6,153.8l-5.4,-7.0M129.2,149.3l-1.1,-7.9M137.4,137.5l2.9,-8.8M153.2,139.5l-1.1,-8.3M107.9,121.9l-3.4,-8.0M121.7,121.8l3.0,-14.4" stroke="#dad0c2" stroke-width="0.35" stroke-opacity="0.70" fill="none"/>
<path d="M131.9,145.0l-5.3,-11.9M148.3,131.4l3.4,-9.8M141.0,135.2l3.0,-11.8M145.1,133.3l-2.0,-13.7M137.6,116.7l0.3,-11.5M111.6,125.3l-0.7,-10.6M145.3,133.2l2.6,-8.4" stroke="#c4b8aa" stroke-width="0.35" stroke-opacity="0.70" fill="none"/>
<path d="M130.6,154.7l-5.4,-12.7M104.4,143.9l-9.0,-10.6M157.5,141.4l1.2,-8.8M114.7,125.0l-4.2,-13.7M147.9,138.3l0.7,-6.1M150.4,125.0l6.1,-12.2M114.7,137.6l-4.7,-11.5M116.3,147.7l-0.0,-12.8M115.1,145.3l-4.2,-6.7" stroke="#b4a698" stroke-width="0.35" stroke-opacity="0.70" fill="none"/>
<path d="M123.3,145.5l-2.6,-7.2M154.1,133.4l-0.1,-13.3M144.4,149.6l6.2,-11.9" stroke="#b4a698" stroke-width="0.57" stroke-opacity="0.70" fill="none"/>
<path d="M138.4,136.7l-3.6,-8.8M123.5,140.3l2.2,-13.4M136.9,153.3l-0.1,-13.4M130.7,121.8l-1.6,-9.5M116.5,135.4l-4.5,-8.8" stroke="#a89a8c" stroke-width="0.57" stroke-opacity="0.70" fill="none"/>
<path d="M150.5,144.6l2.9,-6.5M136.4,120.8l-2.4,-14.5" stroke="#a89a8c" stroke-width="0.35" stroke-opacity="0.70" fill="none"/>
<path d="M104.4,137.8l-0.9,-6.8M134.2,150.9l-3.1,-6.2M112.9,145.6l-2.8,-5.9M105.0,137.8l-7.9,-7.0M115.0,143.4l-2.6,-10.4M122.4,154.3l-4.1,-5.2M118.7,126.3l-5.2,-10.0M132.5,132.3l-5.9,-13.5" stroke="#d0c4b6" stroke-width="0.80" stroke-opacity="0.70" fill="none"/>
<path d="M146.3,141.5l-0.5,-8.1M115.8,142.7l-2.9,-6.3M103.7,139.1l-4.0,-6.1M147.0,134.2l5.6,-11.8M106.0,138.0l-4.0,-5.8M148.2,135.9l1.9,-12.7M119.3,129.5l-4.8,-7.2M115.8,121.3l1.4,-7.7M130.3,129.2l-4.9,-9.2M113.9,131.1l-6.4,-8.1" stroke="#a89a8c" stroke-width="0.80" stroke-opacity="0.70" fill="none"/>
<path d="M123.9,133.5l-3.1,-8.7M121.6,149.3l-1.0,-6.1M119.5,136.6l1.6,-11.8" stroke="#d2c6b6" stroke-width="0.57" stroke-opacity="0.70" fill="none"/>
<path d="M144.2,132.3l0.3,-7.9M147.2,126.9l-0.8,-11.9M145.6,119.7l-4.5,-13.8M103.9,128.4l-7.2,-7.4M141.3,120.7l-2.5,-6.2" stroke="#d2c6b6" stroke-width="0.35" stroke-opacity="0.70" fill="none"/>
<path d="M148.2,140.7l-3.3,-11.6M129.8,138.5l-0.1,-11.2" stroke="#dad0c2" stroke-width="0.80" stroke-opacity="0.70" fill="none"/>
<path d="M107.9,124.4l-4.2,-10.9M120.7,142.9l0.5,-14.1M119.6,146.4l-1.0,-7.4M136.9,130.4l0.2,-7.6M118.8,141.8l-1.8,-6.4M149.9,140.4l4.0,-12.4M105.2,130.3l-0.9,-10.2" stroke="#d0c4b6" stroke-width="0.35" stroke-opacity="0.70" fill="none"/>
<path d="M135.7,118.9l0.2,-6.9M116.1,148.6l-8.4,-9.9M115.3,135.7l-2.4,-6.6M140.3,138.4l-4.4,-11.2M146.4,141.5l-3.0,-9.2" stroke="#b4a698" stroke-width="0.80" stroke-opacity="0.70" fill="none"/>
<path d="M124.1,122.6l-5.1,-7.6M146.0,118.1l6.0,-13.4M127.9,148.1l-1.7,-9.9" stroke="#c4b8aa" stroke-width="0.57" stroke-opacity="0.70" fill="none"/>
<path d="M130.9,129.5l2.3,-10.6M141.4,146.6l1.0,-6.5M134.2,136.1l0.4,-12.3M128.9,131.1l0.2,-9.3M124.3,130.4l0.8,-13.8" stroke="#d0c4b6" stroke-width="0.57" stroke-opacity="0.70" fill="none"/>
<path d="M102.1,136.6l-1.3,-6.3M128.7,136.7l1.2,-11.8M138.1,150.0l-4.4,-10.1M125.4,120.5l1.7,-13.1M138.4,117.6l-0.6,-12.3M128.0,146.1l-5.3,-9.9" stroke="#d2c6b6" stroke-width="0.80" stroke-opacity="0.70" fill="none"/>
<path d="M105.8,142.8l-7.2,-8.6M144.7,144.5l-2.3,-14.4M155.9,144.1l0.9,-9.4" stroke="#c4b8aa" stroke-width="0.80" stroke-opacity="0.70" fill="none"/>
<path d="M134.8,149.3l-5.6,-12.9" stroke="#dad0c2" stroke-width="0.57" stroke-opacity="0.70" fill="none"/>
<path d="M98.7,119.9l-4.8,-10.4M89.9,125.2l-0.9,-9.9M109.6,108.3l-0.2,-9.2M94.9,88.4l-2.8,-11.5M106.9,119.8l0.4,-9.5M92.5,120.9l-0.3,-10.6M101.5,112.8l-6.5,-10.7M102.2,110.4l0.0,-7.0" stroke="#b4a698" stroke-width="0.35" stroke-opacity="0.70" fill="none"/>
<path d="M91.4,106.8l-6.6,-8.4M105.8,92.2l1.9,-11.3M110.2,122.2l1.0,-11.2M101.7,122.8l-0.1,-12.2M84.6,101.9l-3.2,-10.8M119.3,122.5l3.8,-10.0M98.1,108.7l-0.5,-9.6" stroke="#dad0c2" stroke-width="0.57" stroke-opacity="0.70" fill="none"/>
<path d="M110.7,120.7l2.1,-7.8M76.3,109.5l-1.1,-6.7M72.3,123.7l-3.0,-10.7M113.9,119.4l-2.6,-10.6M120.6,111.4l2.0,-9.9M84.2,109.7l-2.4,-5.4M108.7,130.2l1.7,-9.4M103.2,121.9l-2.9,-5.9M93.7,116.6l-1.2,-6.3M104.8,105.9l0.2,-12.0M86.4,92.4l-7.7,-9.4M83.4,112.8l-1.3,-9.4M117.7,109.0l-1.2,-6.8M116.3,93.5l-2.9,-7.2M117.5,118.8l-1.5,-9.8" stroke="#a89a8c" stroke-width="0.35" stroke-opacity="0.70" fill="none"/>
<path d="M76.3,118.2l-9.4,-7.6M70.9,102.4l-1.7,-7.0M88.5,94.1l-4.8,-7.3M90.5,125.8l-4.7,-5.7M88.9,107.5l-2.6,-8.7M67.4,110.0l-9.0,-9.2M107.1,94.8l1.2,-11.5M114.3,95.0l-1.3,-6.0M90.3,108.7l-2.7,-6.4M83.6,99.4l-3.8,-8.5M112.8,122.8l-0.1,-11.0" stroke="#a89a8c" stroke-width="0.57" stroke-opacity="0.70" fill="none"/>
<path d="M122.9,116.5l2.8,-9.9M109.8,103.2l0.3,-6.5M97.8,104.4l-2.2,-6.9M80.0,96.9l-1.4,-7.5M105.3,101.0l1.8,-7.8M96.2,126.5l-3.6,-4.0M100.4,126.6l-1.8,-9.5M78.1,110.0l-1.5,-7.2M78.3,115.4l-1.9,-8.1M113.9,108.7l-0.7,-11.0M87.1,122.0l-3.7,-3.5M120.3,103.6l-1.6,-10.9" stroke="#dad0c2" stroke-width="0.80" stroke-opacity="0.70" fill="none"/>
<path d="M118.1,116.5l0.1,-6.1M111.8,93.3l-3.3,-9.9M107.6,111.9l1.2,-7.3" stroke="#b4a698" stroke-width="0.80" stroke-opacity="0.70" fill="none"/>
<path d="M119.3,108.9l0.1,-5.1M94.3,116.6l-0.7,-6.2M72.7,109.1l-3.2,-5.5M79.6,111.7l-2.7,-7.7M78.2,91.2l-2.1,-8.9M71.4,96.5l-0.0,-7.4M88.2,127.0l-5.8,-5.7" stroke="#dad0c2" stroke-width="0.35" stroke-opacity="0.70" fill="none"/>
<path d="M101.6,132.8l-3.5,-4.8M96.2,106.3l-3.9,-10.1M118.6,100.9l0.2,-7.8M95.0,108.5l1.0,-7.1M116.1,104.6l0.7,-5.8M101.0,89.7l0.2,-11.7M114.5,105.6l-2.4,-4.5" stroke="#c4b8aa" stroke-width="0.80" stroke-opacity="0.70" fill="none"/>
<path d="M82.7,104.5l-1.2,-6.3M117.4,114.2l-3.0,-7.4M83.8,115.2l-6.7,-8.3M79.9,119.8l-5.7,-6.8M77.2,128.2l-4.8,-3.8M107.3,96.0l-0.0,-6.9M88.2,104.1l-2.7,-8.5M80.6,96.7l-4.9,-4.9M95.7,87.5l-2.7,-6.6M97.9,118.8l-4.1,-7.3M99.7,119.9l-5.8,-7.7M108.8,105.1l-4.4,-7.5M75.1,104.9l-3.0,-11.3M116.7,116.9l-1.8,-6.5M123.1,106.7l-0.4,-11.6" stroke="#d2c6b6" stroke-width="0.57" stroke-opacity="0.70" fill="none"/>
<path d="M76.3,96.4l-0.0,-7.4M100.6,112.5l1.2,-6.7M81.2,108.9l-6.8,-6.2M121.1,121.1l2.6,-11.2M95.7,109.2l-5.2,-10.9M115.7,103.1l2.9,-7.9M91.9,113.9l-5.2,-8.2" stroke="#d2c6b6" stroke-width="0.35" stroke-opacity="0.70" fill="none"/>
<path d="M92.9,132.8l0.3,-12.6M69.3,113.0l-7.1,-5.6M95.3,131.5l-1.6,-8.6M66.6,104.4l-3.1,-5.5M113.9,126.9l-4.4,-10.1M78.2,102.0l-1.6,-10.9M99.2,108.4l-3.7,-8.0M97.9,102.1l1.5,-12.4" stroke="#d0c4b6" stroke-width="0.80" stroke-opacity="0.70" fill="none"/>
<path d="M113.4,119.7l3.0,-11.6M71.7,119.0l-4.2,-6.0M96.3,100.0l-1.7,-4.8M116.6,114.2l-3.9,-10.2M75.8,107.6l-0.2,-7.8M82.5,127.4l-4.7,-7.6" stroke="#b4a698" stroke-width="0.57" stroke-opacity="0.70" fill="none"/>
<path d="M84.0,124.8l-2.1,-8.3M79.2,124.9l-2.5,-4.5M122.5,112.3l0.5,-7.5M90.4,100.5l-3.8,-6.5M80.6,114.9l-3.4,-5.5" stroke="#d0c4b6" stroke-width="0.57" stroke-opacity="0.70" fill="none"/>
<path d="M98.7,97.4l-5.9,-10.9M98.7,101.9l-5.8,-8.8M70.5,97.1l-4.1,-5.4M109.2,103.5l-1.3,-7.7M73.3,97.7l-1.9,-10.2M82.4,116.3l-2.0,-7.4M112.9,128.8l0.3,-9.4M101.3,120.7l-5.6,-7.6M103.0,125.6l-5.3,-10.2M68.2,100.4l-7.5,-9.9" stroke="#c4b8aa" stroke-width="0.35" stroke-opacity="0.70" fill="none"/>
<path d="M97.4,128.4l-5.5,-7.3M114.7,99.9l-2.1,-6.1M94.1,117.8l-0.2,-7.0M87.0,133.1l-3.7,-11.2M76.1,111.5l-0.4,-8.1M88.2,118.5l-2.3,-5.6M84.3,104.0l-7.0,-8.1M113.7,104.2l1.3,-5.1" stroke="#d2c6b6" stroke-width="0.80" stroke-opacity="0.70" fill="none"/>
<path d="M100.4,121.6l-0.5,-6.7M108.2,91.5l-0.4,-10.5M72.6,105.7l-0.9,-7.2M77.3,100.9l-1.7,-9.1M99.7,119.3l1.4,-11.2M106.8,108.3l-3.6,-7.2M109.5,130.5l-0.6,-10.2M75.9,118.5l-8.4,-8.1" stroke="#d0c4b6" stroke-width="0.35" stroke-opacity="0.70" fill="none"/>
<path d="M83.1,128.8l-4.7,-10.6M86.5,129.1l-1.5,-12.0M113.1,123.6l2.7,-9.3M77.8,100.3l-5.8,-8.0M92.9,115.4l0.7,-7.5M92.9,110.1l0.3,-6.6" stroke="#c4b8aa" stroke-width="0.57" stroke-opacity="0.70" fill="none"/>
<path d="M105.8,125.1l2.2,-9.7M114.8,106.0l-2.1,-7.2M90.9,125.3l0.3,-6.2M94.1,105.3l-2.1,-6.7M71.4,101.2l-9.1,-9.3M73.6,119.6l-1.1,-5.5M102.8,89.5l-0.4,-5.6" stroke="#a89a8c" stroke-width="0.80" stroke-opacity="0.70" fill="none"/>
<path d="M436.5,71.6l-3.5,-3.8" stroke="#d0c4b6" stroke-width="0.60" stroke-opacity="0.80" fill="none"/>
<path d="M442.7,56.3l1.8,-8.2" stroke="#b4a698" stroke-width="0.35" stroke-opacity="0.80" fill="none"/>
<path d="M441.4,50.9l-1.6,-6.0" stroke="#dad0c2" stroke-width="0.60" stroke-opacity="0.80" fill="none"/>
<path d="M445.0,51.3l-1.1,-4.5M446.0,69.3l2.0,-7.9M441.4,56.7l0.3,-6.8" stroke="#d2c6b6" stroke-width="0.47" stroke-opacity="0.80" fill="none"/>
<path d="M444.5,60.8l0.7,-7.4M441.2,49.6l-1.6,-7.4M440.0,52.2l1.6,-8.1" stroke="#b4a698" stroke-width="0.47" stroke-opacity="0.80" fill="none"/>
<path d="M436.2,52.2l-1.0,-7.8M446.0,55.1l-0.2,-5.9M443.3,46.7l1.7,-5.7" stroke="#a89a8c" stroke-width="0.35" stroke-opacity="0.80" fill="none"/>
<path d="M438.1,70.5l0.8,-4.2M442.1,65.6l-0.7,-4.7" stroke="#dad0c2" stroke-width="0.35" stroke-opacity="0.80" fill="none"/>
<path d="M447.6,57.3l2.8,-8.4M442.4,51.1l-1.2,-4.4" stroke="#d0c4b6" stroke-width="0.47" stroke-opacity="0.80" fill="none"/>
<path d="M447.9,68.1l0.1,-8.6M444.9,68.6l0.3,-6.3" stroke="#c4b8aa" stroke-width="0.60" stroke-opacity="0.80" fill="none"/>
<path d="M439.3,50.3l-1.2,-4.1" stroke="#d0c4b6" stroke-width="0.35" stroke-opacity="0.80" fill="none"/>
<path d="M445.6,66.1l0.6,-5.8M436.2,58.7l-3.8,-6.0M449.6,63.1l2.8,-3.3" stroke="#d2c6b6" stroke-width="0.60" stroke-opacity="0.80" fill="none"/>
<path d="M439.8,63.0l-1.2,-7.7" stroke="#d2c6b6" stroke-width="0.35" stroke-opacity="0.80" fill="none"/>
<path d="M448.1,67.3l1.5,-4.4" stroke="#c4b8aa" stroke-width="0.35" stroke-opacity="0.80" fill="none"/>
<path d="M434.9,56.6l-2.9,-6.0" stroke="#c4b8aa" stroke-width="0.47" stroke-opacity="0.80" fill="none"/>
<path d="M434.4,59.5l0.3,-7.2" stroke="#b4a698" stroke-width="0.60" stroke-opacity="0.80" fill="none"/>
<path d="M183,2 L187,30" stroke="#8a9098" stroke-width="0.8" fill="none" />
<path d="M163,105 L166,150" stroke="#5a4c40" stroke-width="1.5" fill="none" />
<path d="M245,60 L252,88" stroke="#7a6858" stroke-width="1.3" fill="none" />
<path d="M118,180 L110,215" stroke="#b5a594" stroke-width="1.4" fill="none" />
<path d="M110,215 L118,254" stroke="#5e5048" stroke-width="1.4" fill="none" />
<path d="M100,205 L112,240" stroke="#4e443e" stroke-width="1.1" fill="none" />
<path d="M130,185 L140,215" stroke="#5a4e46" stroke-width="1.2" fill="none" />
<path d="M60,160 L82,215" stroke="#b0a090" stroke-width="1.3" fill="none" />
</g>
<polygon points="173,129 240,118.5 252.5,134 214,188 188.5,220 172,239 121,235 177.5,172.5" fill="#7c9a32" fill-opacity="0.8"/>
<g opacity="0.35">
<polygon points="182,139 185.5,138.5 184.5,149 181,149.5" fill="#d8e0a0" />
<polygon points="189.2,137.9 192.7,137.4 191.7,147.9 188.2,148.4" fill="#d8e0a0" />
<polygon points="196.4,136.8 199.9,136.3 198.9,146.8 195.4,147.3" fill="#d8e0a0" />
<polygon points="203.6,135.7 207.1,135.2 206.1,145.7 202.6,146.2" fill="#d8e0a0" />
<polygon points="210.8,134.6 214.3,134.1 213.3,144.6 209.8,145.1" fill="#d8e0a0" />
<polygon points="218,133.5 221.5,133 220.5,143.5 217,144" fill="#d8e0a0" />
<polygon points="225.2,132.4 228.7,131.9 227.7,142.4 224.2,142.9" fill="#d8e0a0" />
<polygon points="232.4,131.3 235.9,130.8 234.9,141.3 231.4,141.8" fill="#d8e0a0" />
</g>
<g opacity="0.28" filter="url(#b05)">
<path d="M176,160 L246,128" stroke="#26401a" stroke-width="2.2" fill="none" />
<path d="M150,205 L225,160" stroke="#26401a" stroke-width="2.2" fill="none" />
<path d="M140,222 L215,172" stroke="#26401a" stroke-width="2.2" fill="none" />
<path d="M178,190 L240,140" stroke="#26401a" stroke-width="2.2" fill="none" />
</g>
<path d="M240,118.5 L252.5,134 L214,188 L188.5,220 L172,239 L121,235 L177.5,172.5 L173,129" stroke="#e6e21e" stroke-width="1.5" fill="none" stroke-linejoin="round"/>
<path d="M173,129 L240,118.5" stroke="#e2701e" stroke-width="1.6" fill="none"/>
<circle cx="173" cy="129" r="2" fill="#fff"/>
<circle cx="240" cy="118.5" r="2" fill="#fff"/>
<circle cx="252.5" cy="134" r="2" fill="#fff"/>
<circle cx="214" cy="188" r="2" fill="#fff"/>
<circle cx="188.5" cy="220" r="2" fill="#fff"/>
<circle cx="172" cy="239" r="2" fill="#fff"/>
<circle cx="121" cy="235" r="2" fill="#fff"/>
<circle cx="177.5" cy="172.5" r="2" fill="#fff"/>
<rect x="120" y="13" width="27" height="16.5" fill="none" stroke="#7f8a7a" stroke-width="0.6"/>
<path d="M345,254 L345,211 L420,211" fill="none" stroke="#8a9096" stroke-width="0.6" stroke-opacity="0.8"/>
<path d="M253,254 L253,236" fill="none" stroke="#8a9096" stroke-width="0.5" stroke-opacity="0.6"/>
<rect x="361.2" y="14.3" width="67.2" height="24.2" fill="#c5262d" />
<text x="366.2" y="28.2" font-family="Liberation Sans, sans-serif" font-size="7.9" fill="#fff">Widget</text>
</g>
  </svg></div>
<!--PHOTO-END-->
  <div class="t" style="right:49.5px;top:721.3px;font-size:7.3px;color:#333;">rtsp://ADMIN:****@192.168.15.75:5554/live/ch1</div>

  <!-- buttons -->
  <div class="btn" style="left:535.2px;width:56.8px;">APPLY</div>
  <div class="btn" style="left:595px;width:56.3px;">CLOSE</div>
</div>
</body>
</html>
